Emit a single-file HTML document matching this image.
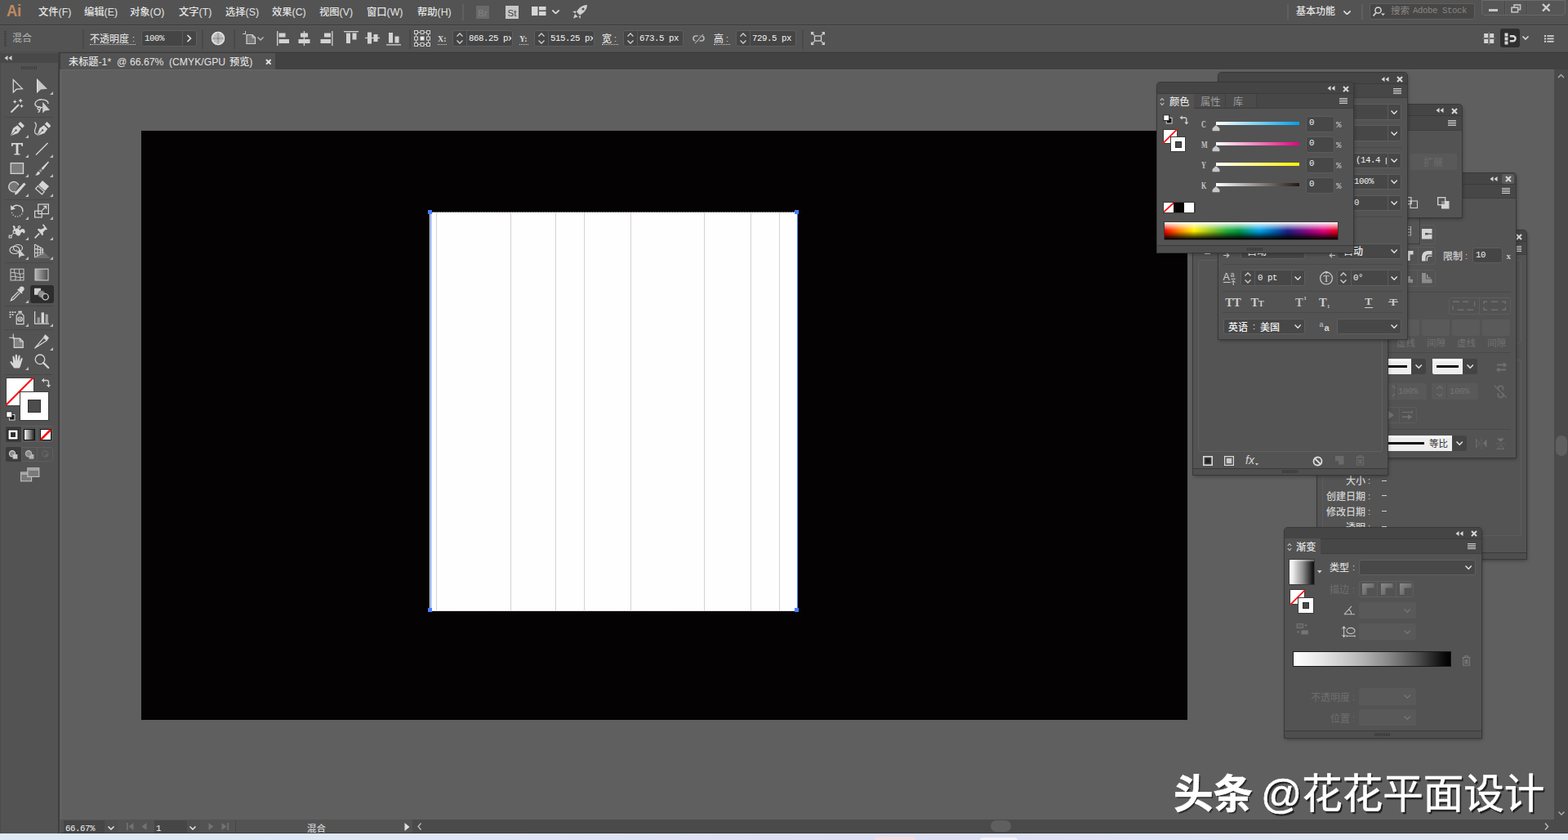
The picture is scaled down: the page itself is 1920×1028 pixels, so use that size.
<!DOCTYPE html><html><head><meta charset="utf-8"><title>Illustrator</title><style>html,body{margin:0;padding:0;background:#535353;overflow:hidden}#r{position:relative;width:1920px;height:1028px;overflow:hidden;font-family:"Liberation Sans",sans-serif}.a{position:absolute;display:block}.p{position:absolute;overflow:hidden;box-sizing:border-box}svg text{font-family:"Liberation Sans","Noto Sans CJK SC",sans-serif;white-space:pre}svg text.m{font-family:"Liberation Mono","Noto Sans CJK SC",monospace;font-size:10.7px;letter-spacing:-0.42px}</style></head><body><div id="r"><div class="a" style="left:0px;top:0px;width:1920px;height:1028px;background:#535353;"></div>
<div class="a" style="left:0px;top:30px;width:1920px;height:1px;background:#3a3a3a;"></div>
<div class="a" style="left:0px;top:31px;width:1920px;height:1px;background:#5a5a5a;"></div>
<span class="a" style="left:8px;top:1px;font:bold 20px/24px 'Liberation Sans',sans-serif;color:#bf8860;transform:scaleX(.92);transform-origin:0 0;letter-spacing:-.3px">Ai</span>
<svg class="a" style="left:46.50px;top:4.35px;overflow:visible" width="43" height="18"><text x="0" y="14.80" font-size="12.3" font-weight="500" fill="#e4e4e4">文件(F)</text></svg>
<svg class="a" style="left:102.50px;top:4.35px;overflow:visible" width="43" height="18"><text x="0" y="14.80" font-size="12.3" font-weight="500" fill="#e4e4e4">编辑(E)</text></svg>
<svg class="a" style="left:158.50px;top:4.35px;overflow:visible" width="45" height="18"><text x="0" y="14.80" font-size="12.3" font-weight="500" fill="#e4e4e4">对象(O)</text></svg>
<svg class="a" style="left:218.50px;top:4.35px;overflow:visible" width="43" height="18"><text x="0" y="14.80" font-size="12.3" font-weight="500" fill="#e4e4e4">文字(T)</text></svg>
<svg class="a" style="left:276.00px;top:4.35px;overflow:visible" width="43" height="18"><text x="0" y="14.80" font-size="12.3" font-weight="500" fill="#e4e4e4">选择(S)</text></svg>
<svg class="a" style="left:332.50px;top:4.35px;overflow:visible" width="44" height="18"><text x="0" y="14.80" font-size="12.3" font-weight="500" fill="#e4e4e4">效果(C)</text></svg>
<svg class="a" style="left:390.50px;top:4.35px;overflow:visible" width="43" height="18"><text x="0" y="14.80" font-size="12.3" font-weight="500" fill="#e4e4e4">视图(V)</text></svg>
<svg class="a" style="left:448.50px;top:4.35px;overflow:visible" width="47" height="18"><text x="0" y="14.80" font-size="12.3" font-weight="500" fill="#e4e4e4">窗口(W)</text></svg>
<svg class="a" style="left:511.00px;top:4.35px;overflow:visible" width="45" height="18"><text x="0" y="14.80" font-size="12.3" font-weight="500" fill="#e4e4e4">帮助(H)</text></svg>
<div class="a" style="left:566px;top:5px;width:2px;height:20px;background:#606060;"></div>
<div class="a" style="left:583px;top:7px;width:16px;height:16px;background:#6a6a6a;"></div>
<span class="a" style="left:591px;top:8.6px;font:normal 11.5px/14px 'Liberation Sans',sans-serif;color:#818181;white-space:pre;transform:translateX(-50%);">Br</span>
<div class="a" style="left:619px;top:7px;width:16px;height:16px;background:#c6c6c6;"></div>
<span class="a" style="left:627px;top:8.6px;font:normal 11.5px/14px 'Liberation Sans',sans-serif;color:#484848;white-space:pre;transform:translateX(-50%);">St</span>
<svg class="a" style="left:651px;top:8px;" width="18" height="12" viewBox="0 0 18 12"><rect x="0" y="0" width="7.5" height="11" fill="#d6d6d6"/><rect x="9" y="0" width="8.5" height="4.5" fill="#d6d6d6"/><rect x="9" y="6" width="8.5" height="5" fill="#d6d6d6"/></svg>
<svg class="a" style="left:676.2px;top:11.55px;" width="9" height="5.5" viewBox="0 0 9 5.5"><path d="M1 1 L4.5 4.5 L8 1" fill="none" stroke="#e0e0e0" stroke-width="1.7" stroke-linecap="square"/></svg>
<svg class="a" style="left:699px;top:5px;" width="22" height="19" viewBox="0 0 22 19"><g fill="#cfcfcf"><path d="M20 1 C14 1.5 9.5 4.5 7 9.5 L11 13.5 C16 11 19.5 7 20 1 Z"/><path d="M6.5 8.5 L2 9 L5.5 11.5 Z"/><path d="M12 14 L11.5 18 L9.5 15 Z"/><path d="M5 12 L8.5 15.5 L3 17.5 Z"/></g><circle cx="15" cy="6" r="1.6" fill="#535353"/></svg>
<div class="a" style="left:1575.5px;top:5px;width:2px;height:19px;background:#5f5f5f;"></div>
<svg class="a" style="left:1587.00px;top:2.74px;overflow:visible" width="50" height="17"><text x="0" y="14.50" font-size="12" font-weight="500" fill="#e4e4e4">基本功能</text></svg>
<svg class="a" style="left:1644.8px;top:12.55px;" width="9" height="5.5" viewBox="0 0 9 5.5"><path d="M1 1 L4.5 4.5 L8 1" fill="none" stroke="#e0e0e0" stroke-width="1.7" stroke-linecap="square"/></svg>
<div class="a" style="left:1666.5px;top:5px;width:2px;height:19px;background:#5f5f5f;"></div>
<div class="a" style="left:1677px;top:4px;width:129px;height:20px;background:#474747;border:1px solid #606060;border-radius:3px;box-sizing:border-box"></div>
<svg class="a" style="left:1680px;top:7px;" width="18" height="14" viewBox="0 0 18 14"><circle cx="7.5" cy="5.5" r="3.6" fill="none" stroke="#d8d8d8" stroke-width="1.5"/><path d="M5 8.5 L1.5 12.5" stroke="#d8d8d8" stroke-width="1.8"/><path d="M11 9.5 L16 9.5 L13.5 12 Z" fill="#d8d8d8"/></svg>
<svg class="a" style="left:1702.50px;top:2.86px;overflow:visible" width="25" height="17"><text x="0" y="14.00" font-size="11.5" fill="#8a8480">搜索</text></svg>
<svg class="a" style="left:1730.00px;top:3.11px;overflow:hidden" width="67" height="16"><text class="m" x="0" y="13.2" fill="#8a8480">Adobe Stock</text></svg>
<div class="a" style="left:1814px;top:-1px;width:103px;height:19.5px;background:#565656;border:1px solid #676767;box-sizing:border-box;border-radius:0 0 4px 4px"></div>
<div class="a" style="left:1815px;top:0px;width:101px;height:1.2px;background:#6c6c6c;"></div>
<div class="a" style="left:1842px;top:1px;width:1px;height:17px;background:#474747;"></div>
<div class="a" style="left:1843px;top:1px;width:1px;height:17px;background:#606060;"></div>
<div class="a" style="left:1869px;top:1px;width:1px;height:17px;background:#474747;"></div>
<div class="a" style="left:1870px;top:1px;width:1px;height:17px;background:#606060;"></div>
<div class="a" style="left:1823px;top:11px;width:10.5px;height:3.2px;background:#c6c6c6;"></div>
<svg class="a" style="left:1849.5px;top:4.5px;" width="14" height="11" viewBox="0 0 14 11"><rect x="4" y="1" width="7.6" height="5.6" fill="none" stroke="#bdbdbd" stroke-width="1.7"/><rect x="1" y="4.2" width="7.6" height="5.6" fill="#565656" stroke="#bdbdbd" stroke-width="1.7"/></svg>
<svg class="a" style="left:1887.7px;top:3.7px;" width="10.6" height="10.6" viewBox="0 0 10.6 10.6"><path d="M1 1 L9.6 9.6 M9.6 1 L1 9.6" stroke="#cdcdcd" stroke-width="2.3" fill="none"/></svg>
<div class="a" style="left:0px;top:63px;width:1920px;height:1px;background:#4c4c4c;"></div>
<svg class="a" style="left:5px;top:38px;" width="4" height="20" viewBox="0 0 4 20"><rect x="0" y="0" width="3" height="1" fill="#3a3a3a"/><rect x="0" y="2" width="3" height="1" fill="#3a3a3a"/><rect x="0" y="4" width="3" height="1" fill="#3a3a3a"/><rect x="0" y="6" width="3" height="1" fill="#3a3a3a"/><rect x="0" y="8" width="3" height="1" fill="#3a3a3a"/><rect x="0" y="10" width="3" height="1" fill="#3a3a3a"/><rect x="0" y="12" width="3" height="1" fill="#3a3a3a"/><rect x="0" y="14" width="3" height="1" fill="#3a3a3a"/><rect x="0" y="16" width="3" height="1" fill="#3a3a3a"/><rect x="0" y="18" width="3" height="1" fill="#3a3a3a"/></svg>
<svg class="a" style="left:15.00px;top:35.74px;overflow:visible" width="26" height="17"><text x="0" y="14.50" font-size="12" fill="#b4b4b4">混合</text></svg>
<div class="a" style="left:100.5px;top:35.5px;width:2px;height:24.5px;background:#494949;"></div>
<svg class="a" style="left:110.00px;top:37.24px;overflow:visible" width="50" height="17"><text x="0" y="14.50" font-size="12" font-weight="500" fill="#dcdcdc">不透明度</text></svg>
<span class="a" style="left:162px;top:40px;font:normal 11px/14px 'Liberation Sans',sans-serif;color:#dcdcdc;white-space:pre;">:</span>
<div class="a" style="left:110px;top:54px;width:56px;height:1px;background:none;border-top:1px dotted #cfcfcf;height:0"></div>
<div class="a" style="left:173px;top:37px;width:68px;height:20px;background:#454545;border:1px solid #5e5e5e;border-radius:3px;box-sizing:border-box"></div>
<div class="a" style="left:223px;top:38px;width:1px;height:18px;background:#5a5a5a;"></div>
<svg class="a" style="left:176.50px;top:36.81px;overflow:hidden" width="25" height="16"><text class="m" x="0" y="13.2" fill="#f0f0f0">100%</text></svg>
<svg class="a" style="left:228px;top:42px;" width="7" height="10" viewBox="0 0 7 10"><path d="M1.5 1 L5.5 5 L1.5 9" fill="none" stroke="#e6e6e6" stroke-width="1.6"/></svg>
<div class="a" style="left:247.2px;top:35.5px;width:2px;height:24.5px;background:#494949;"></div>
<svg class="a" style="left:258px;top:38px;" width="18" height="18" viewBox="0 0 18 18"><circle cx="9" cy="9" r="8.2" fill="#d2d2d2"/><g fill="#a9a9a9"><rect x="7.4" y="2.2" width="3.2" height="13.6"/><rect x="2.2" y="7.4" width="13.6" height="3.2"/><path d="M4.2 4.2 L7 5.2 L5.2 7 Z M13.8 4.2 L11 5.2 L12.8 7 Z M13.8 13.8 L11 12.8 L12.8 11 Z M4.2 13.8 L7 12.8 L5.2 11 Z"/></g><circle cx="9" cy="9" r="1.2" fill="#8a8a8a"/><circle cx="9" cy="9" r="7.6" fill="none" stroke="#e6e6e6" stroke-width="1.1"/></svg>
<div class="a" style="left:285.5px;top:35.5px;width:2px;height:24.5px;background:#494949;"></div>
<svg class="a" style="left:297px;top:38px;" width="18" height="17" viewBox="0 0 18 17"><path d="M3.5 0 V4 M0 3.5 H4" stroke="#c8c8c8" stroke-width="1"/><path d="M5 4.5 H12 L15.5 8 V15.5 H5 Z" fill="#787878" stroke="#d0d0d0" stroke-width="1.2"/><path d="M12 4.5 V8 H15.5" fill="none" stroke="#d0d0d0" stroke-width="1"/></svg>
<svg class="a" style="left:314.5px;top:44.5px;" width="8" height="5" viewBox="0 0 8 5"><path d="M1 1 L4 4 L7 1" fill="none" stroke="#bdbdbd" stroke-width="1.4" stroke-linecap="square"/></svg>
<svg class="a" style="left:339px;top:38px;" width="16" height="18" viewBox="0 0 16 18"><rect x="0" y="0" width="1.3" height="18" fill="#d2d2d2"/><rect x="2.5" y="2.5" width="8" height="5" fill="#d2d2d2"/><rect x="2.5" y="10" width="12.5" height="5" fill="#d2d2d2"/></svg>
<svg class="a" style="left:365px;top:38px;" width="15" height="18" viewBox="0 0 15 18"><rect x="6.8" y="0" width="1.3" height="18" fill="#d2d2d2"/><rect x="3" y="2.5" width="9" height="5" fill="#d2d2d2"/><rect x="0.5" y="10" width="14" height="5" fill="#d2d2d2"/></svg>
<svg class="a" style="left:392px;top:38px;" width="16" height="18" viewBox="0 0 16 18"><rect x="14.2" y="0" width="1.3" height="18" fill="#d2d2d2"/><rect x="5" y="2.5" width="8" height="5" fill="#d2d2d2"/><rect x="0.5" y="10" width="12.5" height="5" fill="#d2d2d2"/></svg>
<svg class="a" style="left:421px;top:38px;" width="18" height="16" viewBox="0 0 18 16"><rect x="0" y="0" width="18" height="1.3" fill="#d2d2d2"/><rect x="3" y="2.5" width="5" height="12.5" fill="#d2d2d2"/><rect x="10.5" y="2.5" width="5" height="8" fill="#d2d2d2"/></svg>
<svg class="a" style="left:447px;top:39px;" width="18" height="15" viewBox="0 0 18 15"><rect x="0" y="6.8" width="18" height="1.3" fill="#d2d2d2"/><rect x="3" y="0.5" width="5" height="14" fill="#d2d2d2"/><rect x="10.5" y="3" width="5" height="9" fill="#d2d2d2"/></svg>
<svg class="a" style="left:473px;top:39px;" width="18" height="17" viewBox="0 0 18 17"><rect x="0" y="15.2" width="18" height="1.3" fill="#d2d2d2"/><rect x="3" y="1" width="5" height="12.5" fill="#d2d2d2"/><rect x="10.5" y="5.5" width="5" height="8" fill="#d2d2d2"/></svg>
<div class="a" style="left:500.5px;top:35.5px;width:2px;height:24.5px;background:#494949;"></div>
<svg class="a" style="left:506.5px;top:36.5px;" width="20" height="20" viewBox="0 0 20 20"><rect x="0.5" y="0.5" width="4" height="4" fill="none" stroke="#d0d0d0" stroke-width="1"/><rect x="8" y="0.5" width="4" height="4" fill="none" stroke="#d0d0d0" stroke-width="1"/><rect x="15.5" y="0.5" width="4" height="4" fill="none" stroke="#d0d0d0" stroke-width="1"/><rect x="0.5" y="8" width="4" height="4" fill="none" stroke="#d0d0d0" stroke-width="1"/><rect x="8" y="8" width="4" height="4" fill="#f2f2f2" stroke="#d0d0d0" stroke-width="1"/><rect x="15.5" y="8" width="4" height="4" fill="none" stroke="#d0d0d0" stroke-width="1"/><rect x="0.5" y="15.5" width="4" height="4" fill="none" stroke="#d0d0d0" stroke-width="1"/><rect x="8" y="15.5" width="4" height="4" fill="none" stroke="#d0d0d0" stroke-width="1"/><rect x="15.5" y="15.5" width="4" height="4" fill="none" stroke="#d0d0d0" stroke-width="1"/><path d="M4.5 2.5 H8 M12 2.5 H15.5 M4.5 17.5 H8 M12 17.5 H15.5 M2.5 4.5 V8 M2.5 12 V15.5 M17.5 4.5 V8 M17.5 12 V15.5" stroke="#d0d0d0" stroke-width="1"/></svg>
<span class="a" style="left:536px;top:40px;font:bold 11px/14px 'Liberation Serif',sans-serif;color:#dcdcdc;white-space:pre;transform:scaleX(.9);transform-origin:0 50%;">X:</span>
<div class="a" style="left:536px;top:54px;width:10.5px;height:1px;background:none;border-top:1px dotted #cfcfcf;height:0"></div>
<div class="a" style="left:553.5px;top:37px;width:74.5px;height:20px;background:#454545;border:1px solid #5e5e5e;border-radius:3px;box-sizing:border-box"></div>
<div class="a" style="left:570.5px;top:38px;width:1px;height:18px;background:#5a5a5a;"></div>
<svg class="a" style="left:557.8px;top:38px;" width="10" height="18" viewBox="0 0 10 18"><path d="M1.5 6.5 L5 3 L8.5 6.5 M1.5 11.5 L5 15 L8.5 11.5" fill="none" stroke="#cfcfcf" stroke-width="1.3"/></svg>
<svg class="a" style="left:573.50px;top:36.91px;overflow:hidden" width="52.5" height="16"><text class="m" x="0" y="13.2" fill="#f4f4f4">868.25 px</text></svg>
<span class="a" style="left:636px;top:40px;font:bold 11px/14px 'Liberation Serif',sans-serif;color:#dcdcdc;white-space:pre;transform:scaleX(.9);transform-origin:0 50%;">Y:</span>
<div class="a" style="left:636px;top:54px;width:10.5px;height:1px;background:none;border-top:1px dotted #cfcfcf;height:0"></div>
<div class="a" style="left:653.5px;top:37px;width:74.5px;height:20px;background:#454545;border:1px solid #5e5e5e;border-radius:3px;box-sizing:border-box"></div>
<div class="a" style="left:670.5px;top:38px;width:1px;height:18px;background:#5a5a5a;"></div>
<svg class="a" style="left:657.8px;top:38px;" width="10" height="18" viewBox="0 0 10 18"><path d="M1.5 6.5 L5 3 L8.5 6.5 M1.5 11.5 L5 15 L8.5 11.5" fill="none" stroke="#cfcfcf" stroke-width="1.3"/></svg>
<svg class="a" style="left:673.50px;top:36.91px;overflow:hidden" width="52.5" height="16"><text class="m" x="0" y="13.2" fill="#f4f4f4">515.25 px</text></svg>
<svg class="a" style="left:737.00px;top:37.24px;overflow:visible" width="14" height="17"><text x="0" y="14.50" font-size="12" font-weight="500" fill="#dcdcdc">宽</text></svg>
<span class="a" style="left:752px;top:40px;font:normal 11px/14px 'Liberation Sans',sans-serif;color:#dcdcdc;white-space:pre;">:</span>
<div class="a" style="left:737px;top:54px;width:20px;height:1px;background:none;border-top:1px dotted #cfcfcf;height:0"></div>
<div class="a" style="left:762.5px;top:37px;width:74.5px;height:20px;background:#454545;border:1px solid #5e5e5e;border-radius:3px;box-sizing:border-box"></div>
<div class="a" style="left:779.5px;top:38px;width:1px;height:18px;background:#5a5a5a;"></div>
<svg class="a" style="left:766.8px;top:38px;" width="10" height="18" viewBox="0 0 10 18"><path d="M1.5 6.5 L5 3 L8.5 6.5 M1.5 11.5 L5 15 L8.5 11.5" fill="none" stroke="#cfcfcf" stroke-width="1.3"/></svg>
<svg class="a" style="left:782.50px;top:36.91px;overflow:hidden" width="52.5" height="16"><text class="m" x="0" y="13.2" fill="#f4f4f4">673.5 px</text></svg>
<svg class="a" style="left:874.00px;top:37.24px;overflow:visible" width="14" height="17"><text x="0" y="14.50" font-size="12" font-weight="500" fill="#dcdcdc">高</text></svg>
<span class="a" style="left:889px;top:40px;font:normal 11px/14px 'Liberation Sans',sans-serif;color:#dcdcdc;white-space:pre;">:</span>
<div class="a" style="left:874px;top:54px;width:20px;height:1px;background:none;border-top:1px dotted #cfcfcf;height:0"></div>
<div class="a" style="left:900.8px;top:37px;width:74.5px;height:20px;background:#454545;border:1px solid #5e5e5e;border-radius:3px;box-sizing:border-box"></div>
<div class="a" style="left:917.8px;top:38px;width:1px;height:18px;background:#5a5a5a;"></div>
<svg class="a" style="left:905.1px;top:38px;" width="10" height="18" viewBox="0 0 10 18"><path d="M1.5 6.5 L5 3 L8.5 6.5 M1.5 11.5 L5 15 L8.5 11.5" fill="none" stroke="#cfcfcf" stroke-width="1.3"/></svg>
<svg class="a" style="left:920.80px;top:36.91px;overflow:hidden" width="52.5" height="16"><text class="m" x="0" y="13.2" fill="#f4f4f4">729.5 px</text></svg>
<svg class="a" style="left:848px;top:40px;" width="15" height="14" viewBox="0 0 15 14"><g fill="none" stroke="#b8b8b8" stroke-width="1.6"><path d="M6.5 4 H4 a3 3 0 0 0 0 6 H6.5"/><path d="M8.5 4 H11 a3 3 0 0 1 0 6 H8.5"/></g><path d="M2 12.5 L13 1.5" stroke="#535353" stroke-width="2.2"/><path d="M3 13 L13 2" stroke="#b8b8b8" stroke-width="1.1"/></svg>
<div class="a" style="left:981.5px;top:35.5px;width:2px;height:24.5px;background:#494949;"></div>
<svg class="a" style="left:992.5px;top:39px;" width="17" height="16" viewBox="0 0 17 16"><g fill="none" stroke="#d0d0d0" stroke-width="1.3"><rect x="4.5" y="5" width="8" height="6"/><path d="M0.7 3.5 V0.7 H3.5 M13.5 0.7 H16.3 V3.5 M16.3 12.5 V15.3 H13.5 M3.5 15.3 H0.7 V12.5 M1 1 L4 4 M16 1 L13 4 M16 15 L13 12 M1 15 L4 12"/></g></svg>
<svg class="a" style="left:1814.5px;top:38.5px;" width="16" height="16" viewBox="0 0 16 16"><g fill="#d4d4d4"><rect x="2.2" y="2" width="5" height="5"/><rect x="9.2" y="2" width="5" height="5"/><rect x="2.2" y="9" width="5" height="5"/><rect x="9.2" y="9" width="5" height="5"/></g><path d="M8.2 0 V16 M0 8 H16" stroke="#8a8a8a" stroke-width=".8"/></svg>
<div class="a" style="left:1837px;top:35px;width:24px;height:23px;background:#2f2f2f;border-radius:3px"></div>
<svg class="a" style="left:1841.5px;top:39.5px;" width="16" height="15" viewBox="0 0 16 15"><g fill="#d8d8d8"><rect x="0.5" y="0.5" width="4" height="4"/><rect x="0.5" y="5.5" width="4" height="4"/><rect x="0.5" y="10.5" width="4" height="4"/></g><path d="M6.8 4.2 H10.6 a3 3 0 0 1 0 6 H6.8" fill="none" stroke="#d8d8d8" stroke-width="2.4"/></svg>
<svg class="a" style="left:1863.5px;top:44px;" width="8" height="5" viewBox="0 0 8 5"><path d="M1 1 L4 4 L7 1" fill="none" stroke="#e0e0e0" stroke-width="1.5" stroke-linecap="square"/></svg>
<svg class="a" style="left:1890.5px;top:42.8px;" width="12" height="9" viewBox="0 0 12 9"><rect x="0" y="0" width="2" height="2" fill="#d4d4d4"/><rect x="3.4" y="0.15" width="8.2" height="1.7" fill="#d4d4d4"/><rect x="0" y="3.4" width="2" height="2" fill="#d4d4d4"/><rect x="3.4" y="3.55" width="8.2" height="1.7" fill="#d4d4d4"/><rect x="0" y="6.8" width="2" height="2" fill="#d4d4d4"/><rect x="3.4" y="6.95" width="8.2" height="1.7" fill="#d4d4d4"/></svg>
<div class="a" style="left:0px;top:64px;width:1920px;height:21px;background:#424242;"></div>
<div class="a" style="left:0px;top:64px;width:1920px;height:1px;background:#3a3a3a;"></div>
<div class="a" style="left:74px;top:65px;width:263px;height:20px;background:#535353;"></div>
<svg class="a" style="left:83.50px;top:65.21px;overflow:visible" width="56" height="18"><text x="0" y="14.70" font-size="12.2" font-weight="500" fill="#e2e2e2">未标题-1*</text></svg>
<svg class="a" style="left:142.60px;top:65.21px;overflow:visible" width="14" height="18"><text x="0" y="14.70" font-size="12.2" font-weight="500" fill="#e2e2e2">@</text></svg>
<svg class="a" style="left:159.00px;top:65.21px;overflow:visible" width="45" height="18"><text x="0" y="14.70" font-size="12.2" font-weight="500" fill="#e2e2e2">66.67%</text></svg>
<svg class="a" style="left:206.50px;top:65.21px;overflow:visible" width="70" height="18"><text x="0" y="14.70" font-size="12.2" font-weight="500" fill="#e2e2e2">(CMYK/GPU</text></svg>
<svg class="a" style="left:280.70px;top:65.21px;overflow:visible" width="31" height="18"><text x="0" y="14.70" font-size="12.2" font-weight="500" fill="#e2e2e2">预览)</text></svg>
<svg class="a" style="left:324.5px;top:71.9px;" width="7.6" height="7.6" viewBox="0 0 7.6 7.6"><path d="M1 1 L6.6 6.6 M6.6 1 L1 6.6" stroke="#e6e6e6" stroke-width="1.9" fill="none"/></svg>
<div class="a" style="left:74px;top:85px;width:1830px;height:918px;background:#5f5f5f;"></div>
<div class="a" style="left:74px;top:85px;width:1830px;height:1px;background:#676767;"></div>
<div class="a" style="left:74px;top:85px;width:1px;height:918px;background:#686868;"></div>
<div class="a" style="left:173px;top:160px;width:1281px;height:721px;background:#040203;"></div>
<div class="a" style="left:526px;top:259.5px;width:451px;height:488px;background:#fefefe;"></div>
<div class="a" style="left:533.5px;top:260px;width:1px;height:487px;background:#d6d3d1;"></div>
<div class="a" style="left:624.5px;top:260px;width:1px;height:487px;background:#d6d3d1;"></div>
<div class="a" style="left:680px;top:260px;width:1px;height:487px;background:#d6d3d1;"></div>
<div class="a" style="left:715.3px;top:260px;width:1px;height:487px;background:#d6d3d1;"></div>
<div class="a" style="left:771.5px;top:260px;width:1px;height:487px;background:#d6d3d1;"></div>
<div class="a" style="left:862.4px;top:260px;width:1px;height:487px;background:#d6d3d1;"></div>
<div class="a" style="left:918.6px;top:260px;width:1px;height:487px;background:#d6d3d1;"></div>
<div class="a" style="left:953.6px;top:260px;width:1px;height:487px;background:#d6d3d1;"></div>
<div class="a" style="left:526px;top:259px;width:451px;height:1px;background:none;border-top:1px dotted #bbb;height:0"></div>
<div class="a" style="left:526px;top:747px;width:451px;height:1px;background:none;border-top:1px dotted #bbb;height:0"></div>
<div class="a" style="left:527px;top:260px;width:1px;height:487px;background:#4a7dff;"></div>
<div class="a" style="left:976px;top:260px;width:1px;height:487px;background:#4a7dff;"></div>
<div class="a" style="left:524px;top:257px;width:5px;height:5px;background:#4a7dff;"></div>
<div class="a" style="left:973px;top:257px;width:5px;height:5px;background:#4a7dff;"></div>
<div class="a" style="left:524px;top:744px;width:5px;height:5px;background:#4a7dff;"></div>
<div class="a" style="left:973px;top:744px;width:5px;height:5px;background:#4a7dff;"></div>
<div class="a" style="left:1903px;top:85px;width:17px;height:918px;background:#4a4a4a;"></div>
<svg class="a" style="left:1907px;top:90px;" width="9" height="6" viewBox="0 0 9 6"><path d="M1 5 L4.5 1.5 L8 5" fill="none" stroke="#b0b0b0" stroke-width="1.3"/></svg>
<div class="a" style="left:1904.5px;top:533px;width:14px;height:25px;background:#5f5f5f;border-radius:7px"></div>
<svg class="a" style="left:1907.5px;top:992.5px;" width="8" height="5" viewBox="0 0 8 5"><path d="M1 1 L4 4 L7 1" fill="none" stroke="#b0b0b0" stroke-width="1.3" stroke-linecap="square"/></svg>
<div class="a" style="left:74px;top:1003px;width:1846px;height:17px;background:#4a4a4a;"></div>
<div class="a" style="left:74px;top:1003px;width:431px;height:17px;background:#535353;"></div>
<div class="a" style="left:78px;top:1004px;width:50px;height:15px;background:#464646;"></div>
<svg class="a" style="left:80.00px;top:1003.51px;overflow:hidden" width="37" height="16"><text class="m" x="0" y="13.2" fill="#f0f0f0">66.67%</text></svg>
<div class="a" style="left:128px;top:1004px;width:16px;height:15px;background:#4f4f4f;"></div>
<svg class="a" style="left:132.3px;top:1010.5px;" width="8" height="5" viewBox="0 0 8 5"><path d="M1 1 L4 4 L7 1" fill="none" stroke="#e6e6e6" stroke-width="1.5" stroke-linecap="square"/></svg>
<svg class="a" style="left:155px;top:1007px;" width="9" height="9" viewBox="0 0 9 9"><rect x="0" y="0" width="1.6" height="9" fill="#727272"/><path d="M8.5 0 V9 L2.5 4.5 Z" fill="#727272"/></svg>
<svg class="a" style="left:173px;top:1007px;" width="7" height="9" viewBox="0 0 7 9"><path d="M6.5 0 V9 L0.5 4.5 Z" fill="#727272"/></svg>
<div class="a" style="left:188.5px;top:1004px;width:40px;height:15px;background:#464646;"></div>
<svg class="a" style="left:190.50px;top:1003.51px;overflow:hidden" width="7" height="16"><text class="m" x="0" y="13.2" fill="#f0f0f0">1</text></svg>
<div class="a" style="left:228.5px;top:1004px;width:16px;height:15px;background:#4f4f4f;"></div>
<svg class="a" style="left:232.3px;top:1010.5px;" width="8" height="5" viewBox="0 0 8 5"><path d="M1 1 L4 4 L7 1" fill="none" stroke="#e6e6e6" stroke-width="1.5" stroke-linecap="square"/></svg>
<svg class="a" style="left:255px;top:1007px;" width="7" height="9" viewBox="0 0 7 9"><path d="M0.5 0 V9 L6.5 4.5 Z" fill="#727272"/></svg>
<svg class="a" style="left:270.5px;top:1007px;" width="9" height="9" viewBox="0 0 9 9"><rect x="7.4" y="0" width="1.6" height="9" fill="#727272"/><path d="M0.5 0 V9 L6.5 4.5 Z" fill="#727272"/></svg>
<div class="a" style="left:288px;top:1004px;width:1px;height:15px;background:#474747;"></div>
<svg class="a" style="left:376.00px;top:1003.75px;overflow:visible" width="25" height="17"><text x="0" y="14.00" font-size="11.5" font-weight="500" fill="#d0d0d0">混合</text></svg>
<svg class="a" style="left:494.5px;top:1007px;" width="7" height="10" viewBox="0 0 7 10"><path d="M0.5 0 V10 L6.5 5 Z" fill="#e0e0e0"/></svg>
<svg class="a" style="left:511px;top:1007px;" width="6" height="9" viewBox="0 0 6 9"><path d="M4.5 0.5 L1 4.5 L4.5 8.5" fill="none" stroke="#c0c0c0" stroke-width="1.3"/></svg>
<svg class="a" style="left:1891px;top:1007px;" width="6" height="9" viewBox="0 0 6 9"><path d="M1 0.5 L4.5 4.5 L1 8.5" fill="none" stroke="#c0c0c0" stroke-width="1.3"/></svg>
<div class="a" style="left:1213px;top:1004px;width:25px;height:14px;background:#5f5f5f;border-radius:7px"></div>
<div class="a" style="left:0px;top:1019px;width:1920px;height:1px;background:#3a3a3a;"></div>
<div class="a" style="left:0px;top:1020px;width:1920px;height:8px;background:linear-gradient(90deg,#deeaf6 0%,#dfe6f5 30%,#dddff2 55%,#dfe4f4 75%,#e2e8f3 100%);"></div>
<div class="a" style="left:1071px;top:1024px;width:50px;height:6px;background:#f6dfe2;border-radius:4px 4px 0 0"></div>
<div class="a" style="left:1200px;top:1025px;width:46px;height:5px;background:#f4f4fa;border-radius:4px 4px 0 0"></div>
<div class="a" style="left:0px;top:64px;width:72px;height:956px;background:#535353;"></div>
<div class="a" style="left:71px;top:64px;width:2px;height:956px;background:#3f3f3f;"></div>
<div class="a" style="left:73px;top:64px;width:1px;height:21px;background:#3f3f3f;"></div>
<div class="a" style="left:73px;top:85px;width:1px;height:935px;background:#595959;"></div>
<div class="a" style="left:0px;top:64px;width:1px;height:956px;background:#4a4a4a;"></div>
<div class="a" style="left:1px;top:65px;width:70px;height:12px;background:#484848;"></div>
<svg class="a" style="left:4.5px;top:68px;" width="10" height="6" viewBox="0 0 10 6"><path d="M4.5 0 L4.5 6 L0.5 3 Z M9.5 0 L9.5 6 L5.5 3 Z" fill="#cfcfcf"/></svg>
<svg class="a" style="left:26px;top:80.5px;" width="20" height="4" viewBox="0 0 20 4"><rect x="0" y="0" width="1" height="4" fill="#3c3c3c"/><rect x="2" y="0" width="1" height="4" fill="#3c3c3c"/><rect x="4" y="0" width="1" height="4" fill="#3c3c3c"/><rect x="6" y="0" width="1" height="4" fill="#3c3c3c"/><rect x="8" y="0" width="1" height="4" fill="#3c3c3c"/><rect x="10" y="0" width="1" height="4" fill="#3c3c3c"/><rect x="12" y="0" width="1" height="4" fill="#3c3c3c"/><rect x="14" y="0" width="1" height="4" fill="#3c3c3c"/><rect x="16" y="0" width="1" height="4" fill="#3c3c3c"/><rect x="18" y="0" width="1" height="4" fill="#3c3c3c"/></svg>
<div class="a" style="left:6px;top:143px;width:59px;height:1px;background:#484848;"></div>
<div class="a" style="left:6px;top:244px;width:59px;height:1px;background:#484848;"></div>
<div class="a" style="left:6px;top:321px;width:59px;height:1px;background:#484848;"></div>
<div class="a" style="left:6px;top:374px;width:59px;height:1px;background:#484848;"></div>
<div class="a" style="left:6px;top:403px;width:59px;height:1px;background:#484848;"></div>
<div class="a" style="left:6px;top:458px;width:59px;height:1px;background:#484848;"></div>
<svg class="a" style="left:10px;top:94px;" width="22" height="22" viewBox="0 0 22 22"><path d="M6.3 3.6 V19 L10.2 15.2 L17.4 14.6 Z" fill="none" stroke="#d6d6d6" stroke-width="1.3" stroke-linejoin="miter"/></svg>
<svg class="a" style="left:40px;top:94px;" width="22" height="22" viewBox="0 0 22 22"><path d="M5.6 2.6 V19.6 L10 15.6 L18 14.8 Z" fill="#c6c6c6"/><path d="M5.6 2.6 V19.6" stroke="#f0f0f0" stroke-width="1"/></svg><svg class="a" style="left:60.5px;top:111.5px;" width="4" height="4" viewBox="0 0 4 4"><path d="M4 0 V4 H0 Z" fill="#bdbdbd"/></svg>
<svg class="a" style="left:10px;top:119px;" width="22" height="22" viewBox="0 0 22 22"><path d="M3.5 18.5 L13 9" stroke="#d6d6d6" stroke-width="2"/><path d="M8.2 2.9 L8.98 4.72 L10.8 5.5 L8.98 6.28 L8.2 8.1 L7.42 6.28 L5.6 5.5 L7.42 4.72 Z" fill="#d6d6d6"/><path d="M15.2 1.4 L16.04 3.36 L18 4.2 L16.04 5.04 L15.2 7 L14.36 5.04 L12.4 4.2 L14.36 3.36 Z" fill="#d6d6d6"/><path d="M16.5 8.4 L17.22 10.08 L18.9 10.8 L17.22 11.52 L16.5 13.2 L15.78 11.52 L14.1 10.8 L15.78 10.08 Z" fill="#d6d6d6"/></svg>
<svg class="a" style="left:40px;top:119px;" width="22" height="22" viewBox="0 0 22 22"><g fill="none" stroke="#d6d6d6" stroke-width="1.3"><path d="M12 12.5 C6 13 2.5 10.5 3 7.5 C3.6 4 8 2.5 12 2.8 C16 3 19.5 5 19 8"/><circle cx="7.8" cy="13.5" r="1.8"/><path d="M8.5 15.2 C9 17 8 18 6.5 18.5"/></g><path d="M12.2 5.8 V19.5 L15.2 16.5 L21 15.8 Z" fill="#cdcdcd"/></svg>
<svg class="a" style="left:10px;top:147px;" width="22" height="22" viewBox="0 0 22 22"><path d="M2.8 19.2 L6 10 L11.3 6.3 L15.8 10.8 L12 16 Z" fill="#d6d6d6"/><path d="M12.3 4.7 L15 2 L20 7 L17.3 9.7 Z" fill="#d6d6d6"/><path d="M3.3 18.7 L9 13" stroke="#535353" stroke-width="1"/><circle cx="9.6" cy="12.4" r="1.2" fill="#535353"/></svg><svg class="a" style="left:30.5px;top:164.5px;" width="4" height="4" viewBox="0 0 4 4"><path d="M4 0 V4 H0 Z" fill="#bdbdbd"/></svg>
<svg class="a" style="left:40px;top:147px;" width="22" height="22" viewBox="0 0 22 22"><path d="M2.5 2.5 C5.5 5 4.5 8 3 11 C1.5 14.5 3 17.5 6 17" fill="none" stroke="#d6d6d6" stroke-width="1.2"/><g transform="translate(2.5,0)"><path d="M2.8 19.2 L6 10 L11.3 6.3 L15.8 10.8 L12 16 Z" fill="#d6d6d6"/><path d="M12.3 4.7 L15 2 L20 7 L17.3 9.7 Z" fill="#d6d6d6"/><path d="M3.3 18.7 L9 13" stroke="#535353" stroke-width="1"/><circle cx="9.6" cy="12.4" r="1.2" fill="#535353"/></g></svg>
<svg class="a" style="left:10px;top:171px;" width="22" height="22" viewBox="0 0 22 22"><path d="M4 4 H18 V8 H16.6 L16 5.8 H12.4 V17 L14.6 17.6 V18.6 H7.4 V17.6 L9.6 17 V5.8 H6 L5.4 8 H4 Z" fill="#d6d6d6"/></svg><svg class="a" style="left:30.5px;top:188.5px;" width="4" height="4" viewBox="0 0 4 4"><path d="M4 0 V4 H0 Z" fill="#bdbdbd"/></svg>
<svg class="a" style="left:40px;top:171px;" width="22" height="22" viewBox="0 0 22 22"><path d="M4 18.5 L18.5 4" stroke="#d6d6d6" stroke-width="1.5"/></svg><svg class="a" style="left:60.5px;top:188.5px;" width="4" height="4" viewBox="0 0 4 4"><path d="M4 0 V4 H0 Z" fill="#bdbdbd"/></svg>
<svg class="a" style="left:10px;top:195px;" width="22" height="22" viewBox="0 0 22 22"><rect x="3.2" y="4.6" width="15.3" height="12.8" fill="#7c7c7c" stroke="#d6d6d6" stroke-width="1.3"/></svg><svg class="a" style="left:30.5px;top:212.5px;" width="4" height="4" viewBox="0 0 4 4"><path d="M4 0 V4 H0 Z" fill="#bdbdbd"/></svg>
<svg class="a" style="left:40px;top:195px;" width="22" height="22" viewBox="0 0 22 22"><path d="M19 2.5 L20 3.5 L12.5 13 L10.5 11 Z" fill="#d6d6d6"/><path d="M9.8 11.8 L11.8 13.8 L9.8 16 L7.6 13.8 Z" fill="#9c9c9c"/><path d="M7 14.5 L9.2 16.7 C8 19 5.5 19.8 3 19.5 C4.8 18.5 5 16 7 14.5 Z" fill="#d6d6d6"/></svg><svg class="a" style="left:60.5px;top:212.5px;" width="4" height="4" viewBox="0 0 4 4"><path d="M4 0 V4 H0 Z" fill="#bdbdbd"/></svg>
<svg class="a" style="left:10px;top:219px;" width="22" height="22" viewBox="0 0 22 22"><path d="M9 15.5 A6.2 6.2 0 1 1 12.8 7.5" fill="#777" stroke="#d6d6d6" stroke-width="1.3"/><path d="M8 19.5 L8.6 16.2 L19.4 4.5 L21.6 6.6 L11 18.4 Z" fill="#d6d6d6"/></svg><svg class="a" style="left:30.5px;top:236.5px;" width="4" height="4" viewBox="0 0 4 4"><path d="M4 0 V4 H0 Z" fill="#bdbdbd"/></svg>
<svg class="a" style="left:40px;top:219px;" width="22" height="22" viewBox="0 0 22 22"><path d="M12 2 L20 9 L15.2 14.6 L7.2 7.6 Z" fill="#d6d6d6"/><path d="M6.4 8.6 L14.2 15.6 L11.4 18.8 L3.6 12 Z" fill="none" stroke="#d6d6d6" stroke-width="1.2"/></svg><svg class="a" style="left:60.5px;top:236.5px;" width="4" height="4" viewBox="0 0 4 4"><path d="M4 0 V4 H0 Z" fill="#bdbdbd"/></svg>
<svg class="a" style="left:10px;top:247px;" width="22" height="22" viewBox="0 0 22 22"><path d="M5 8 A6.8 6.8 0 0 1 17.8 11.5" fill="none" stroke="#d6d6d6" stroke-width="1.5"/><path d="M17.8 11.5 A6.8 6.8 0 0 1 4.3 12.5" fill="none" stroke="#d6d6d6" stroke-width="1.4" stroke-dasharray="1.2 1.8"/><path d="M3 4.2 L3.4 10.2 L9 8.6 Z" fill="#d6d6d6"/></svg><svg class="a" style="left:30.5px;top:264.5px;" width="4" height="4" viewBox="0 0 4 4"><path d="M4 0 V4 H0 Z" fill="#bdbdbd"/></svg>
<svg class="a" style="left:40px;top:247px;" width="22" height="22" viewBox="0 0 22 22"><g fill="none" stroke="#d6d6d6" stroke-width="1.2"><rect x="2.6" y="11.2" width="8.6" height="7.8"/><rect x="6.8" y="3" width="12.6" height="11.6"/><path d="M11.5 10.5 L16.5 5.5 M13.2 5.3 H16.7 V8.8"/></g></svg><svg class="a" style="left:60.5px;top:264.5px;" width="4" height="4" viewBox="0 0 4 4"><path d="M4 0 V4 H0 Z" fill="#bdbdbd"/></svg>
<svg class="a" style="left:10px;top:272px;" width="22" height="22" viewBox="0 0 22 22"><path d="M5.5 5 C7.5 2.5 9.5 5.5 8.5 8.5 C11 6.5 13.5 8 14.5 10 C16 7.5 19.5 7 20.5 10.5 C21 13 19.5 14.5 18.5 13 C17.5 11 15.5 12 15 14.5 C14.2 17.5 10.5 17 9.5 14.5 C8 13 5.8 12.8 5.5 10.5 C7.2 9.8 7.2 7 5.5 5 Z" fill="#d6d6d6"/><g fill="#535353" stroke="#d6d6d6" stroke-width="1.1"><circle cx="7.8" cy="12" r="1.7"/><rect x="1.2" y="16.2" width="2.8" height="2.8"/><circle cx="13.5" cy="5.8" r="1.3"/></g><path d="M4 16.2 L6.6 13.3 M9 10.8 L12.6 6.8" stroke="#d6d6d6" stroke-width="1"/></svg><svg class="a" style="left:30.5px;top:289.5px;" width="4" height="4" viewBox="0 0 4 4"><path d="M4 0 V4 H0 Z" fill="#bdbdbd"/></svg>
<svg class="a" style="left:40px;top:272px;" width="22" height="22" viewBox="0 0 22 22"><path d="M12 2 L17.5 7.5 L16.3 8.7 L15.3 8.4 L12.8 12.2 L13.6 15 L12.4 16.2 L5.6 9.4 L6.8 8.2 L9.6 9 L13.4 6.5 L13.1 5.5 L10.8 3.2 Z" fill="#d6d6d6" transform="rotate(8 11 11)"/><path d="M8.2 13.6 L2.6 19.4" stroke="#d6d6d6" stroke-width="1.6"/></svg><svg class="a" style="left:60.5px;top:289.5px;" width="4" height="4" viewBox="0 0 4 4"><path d="M4 0 V4 H0 Z" fill="#bdbdbd"/></svg>
<svg class="a" style="left:10px;top:296px;" width="22" height="22" viewBox="0 0 22 22"><g fill="none" stroke="#d6d6d6" stroke-width="1.2"><ellipse cx="8" cy="10" rx="6" ry="4.5"/><ellipse cx="12" cy="7.5" rx="5.5" ry="4"/></g><path d="M5 10 h1 M7.5 10 h1 M10 10 h1" stroke="#d6d6d6" stroke-width="1.2"/><path d="M13 8.5 V20 L15.8 17.3 L20.5 16.8 Z" fill="#cdcdcd"/></svg><svg class="a" style="left:30.5px;top:313.5px;" width="4" height="4" viewBox="0 0 4 4"><path d="M4 0 V4 H0 Z" fill="#bdbdbd"/></svg>
<svg class="a" style="left:40px;top:296px;" width="22" height="22" viewBox="0 0 22 22"><g fill="none" stroke="#d6d6d6" stroke-width="1.1"><path d="M2.5 3 V19 M2.5 3 L12.5 8.5 V14 L2.5 19 M6 5 V17.2 M9.3 6.8 V15.6 M2.5 8.4 L12.5 10.3 M2.5 13.7 L12.5 12.2"/></g><g stroke="#8a8a8a" stroke-width="1.1"><path d="M2.5 19 H20.5 M6 17 H18.5 M9.3 15.2 H16.5 M12.5 13.5 H15"/></g></svg><svg class="a" style="left:60.5px;top:313.5px;" width="4" height="4" viewBox="0 0 4 4"><path d="M4 0 V4 H0 Z" fill="#bdbdbd"/></svg>
<svg class="a" style="left:10px;top:325px;" width="22" height="22" viewBox="0 0 22 22"><g fill="none" stroke="#d6d6d6" stroke-width=".9"><rect x="3" y="4.2" width="16" height="13.8"/><path d="M3 9 C8 7 13 12 19 9.5 M3 14 C8 11.5 13 16.5 19 14 M8 4.2 C6 9 11 13 8.5 18 M14 4.2 C12 9 16.5 13 14.5 18"/></g></svg>
<svg class="a" style="left:40px;top:325px;" width="22" height="22" viewBox="0 0 22 22"><defs><linearGradient id="tgr" x1="0" x2="1" y1="0" y2="0"><stop offset="0" stop-color="#b4b4b4"/><stop offset="1" stop-color="#4c4c4c"/></linearGradient></defs><rect x="3" y="4.2" width="16" height="13.8" fill="url(#tgr)" stroke="#c8c8c8" stroke-width="1.1"/></svg>
<svg class="a" style="left:10px;top:349px;" width="22" height="22" viewBox="0 0 22 22"><path d="M14.5 2.3 C16.2 0.8 19 1.6 19.6 3.6 C20 5 19.5 6.2 18.4 7 L16.8 8.6 L17.6 9.4 L16.4 10.6 L11.2 5.4 L12.4 4.2 L13.2 5 Z" fill="#d6d6d6"/><path d="M12.6 7.6 L4.6 15.6 L3.4 18.8 L6.4 17.4 L14.4 9.4" fill="none" stroke="#d6d6d6" stroke-width="1.3"/></svg><svg class="a" style="left:30.5px;top:366.5px;" width="4" height="4" viewBox="0 0 4 4"><path d="M4 0 V4 H0 Z" fill="#bdbdbd"/></svg>
<div class="a" style="left:37px;top:349px;width:28.5px;height:22px;background:#2d2d2d;border-radius:3px"></div>
<svg class="a" style="left:40px;top:349px;" width="22" height="22" viewBox="0 0 22 22"><rect x="2" y="3.8" width="8" height="8" fill="#cfcfcf"/><circle cx="11" cy="11" r="4.2" fill="#8e8e8e" stroke="#535353" stroke-width=".8"/><circle cx="15.6" cy="14.2" r="3.7" fill="#2d2d2d" stroke="#d6d6d6" stroke-width="1.2"/></svg>
<svg class="a" style="left:10px;top:378px;" width="22" height="22" viewBox="0 0 22 22"><g fill="#d6d6d6"><rect x="1.6" y="3.2" width="1.8" height="1.8"/><rect x="4.6" y="3.2" width="1.8" height="1.8"/><rect x="7.6" y="3.2" width="1.8" height="1.8"/><rect x="1.6" y="6.2" width="1.8" height="1.8"/><rect x="4.6" y="6.2" width="1.8" height="1.8"/><rect x="1.6" y="9.2" width="1.8" height="1.8"/><rect x="12.4" y="2.6" width="4.4" height="2.2"/></g><g fill="none" stroke="#d6d6d6" stroke-width="1.2"><path d="M10.2 18.6 V8.4 L12.2 6 H17 L19 8.4 V18.6 Z"/><circle cx="14.6" cy="12.6" r="2.6"/></g><circle cx="14.6" cy="12.6" r="1.1" fill="#d6d6d6"/></svg><svg class="a" style="left:30.5px;top:395.5px;" width="4" height="4" viewBox="0 0 4 4"><path d="M4 0 V4 H0 Z" fill="#bdbdbd"/></svg>
<svg class="a" style="left:40px;top:378px;" width="22" height="22" viewBox="0 0 22 22"><path d="M2.6 3 V18.2 H20" fill="none" stroke="#d6d6d6" stroke-width="1.2"/><rect x="5.6" y="10.4" width="3.2" height="7.2" fill="#9a9a9a"/><rect x="10.6" y="4.4" width="3.4" height="13.2" fill="#d6d6d6"/><rect x="15.6" y="6.6" width="3.2" height="11" fill="#a8a8a8"/></svg><svg class="a" style="left:60.5px;top:395.5px;" width="4" height="4" viewBox="0 0 4 4"><path d="M4 0 V4 H0 Z" fill="#bdbdbd"/></svg>
<svg class="a" style="left:10px;top:407px;" width="22" height="22" viewBox="0 0 22 22"><path d="M6.2 1.6 V8 M1.2 6.2 H8" stroke="#d6d6d6" stroke-width="1.1"/><path d="M7.2 7.2 H14.4 L18.2 11 V18.4 H7.2 Z" fill="#818181" stroke="#d6d6d6" stroke-width="1.2"/><path d="M14.4 7.2 V11 H18.2" fill="none" stroke="#d6d6d6" stroke-width="1"/></svg>
<svg class="a" style="left:40px;top:407px;" width="22" height="22" viewBox="0 0 22 22"><path d="M2.8 19 L13.6 6.2 L17.4 9.6 Z" fill="none" stroke="#d6d6d6" stroke-width="1.2" stroke-linejoin="round"/><path d="M13.2 5.2 L15.4 2.2 L20 6.4 L17.8 9.4 Z" fill="#d6d6d6"/></svg><svg class="a" style="left:60.5px;top:424.5px;" width="4" height="4" viewBox="0 0 4 4"><path d="M4 0 V4 H0 Z" fill="#bdbdbd"/></svg>
<svg class="a" style="left:10px;top:431px;" width="22" height="22" viewBox="0 0 22 22"><path d="M7.2 19.4 C5.5 17 3.4 14.6 2.4 12.6 C2 11.4 3.4 10.8 4.4 11.8 L6.2 13.8 L5.4 6 C5.3 4.6 7.2 4.4 7.5 5.8 L8.6 11 L8.8 3.8 C8.9 2.4 10.9 2.4 11 3.8 L11.3 11 L12.6 4.6 C12.9 3.2 14.8 3.5 14.6 5 L13.9 11.6 L15.8 7.6 C16.4 6.4 18 7 17.6 8.4 L15.6 15 C15.2 17 14.6 18.4 13.8 19.4 Z" fill="#d6d6d6"/></svg><svg class="a" style="left:30.5px;top:448.5px;" width="4" height="4" viewBox="0 0 4 4"><path d="M4 0 V4 H0 Z" fill="#bdbdbd"/></svg>
<svg class="a" style="left:40px;top:431px;" width="22" height="22" viewBox="0 0 22 22"><circle cx="9" cy="8.8" r="5.8" fill="none" stroke="#d6d6d6" stroke-width="1.3"/><path d="M13.2 13 L19.2 19" stroke="#d6d6d6" stroke-width="2.4" stroke-linecap="round"/></svg>
<div class="a" style="left:6.5px;top:461.5px;width:35px;height:35px;background:#ffffff;border:1px solid #3c3c3c;box-sizing:border-box"></div>
<svg class="a" style="left:7px;top:462px;" width="34" height="34" viewBox="0 0 34 34"><path d="M0 34 L34 0" stroke="#ff1010" stroke-width="2.2"/></svg>
<div class="a" style="left:24px;top:479px;width:35.5px;height:35.5px;background:#ffffff;border:1px solid #3c3c3c;box-sizing:border-box"></div>
<div class="a" style="left:34px;top:489px;width:16px;height:16px;background:#4c4c4c;border:1px solid #303030;box-sizing:border-box"></div>
<svg class="a" style="left:50px;top:462px;" width="13" height="13" viewBox="0 0 13 13"><path d="M3.5 3.5 H7.5 Q9.5 3.5 9.5 5.5 V9.5" fill="none" stroke="#cfcfcf" stroke-width="1.4"/><path d="M4 0.8 L0.8 3.5 L4 6.2 Z M6.8 9 L9.5 12.2 L12.2 9 Z" fill="#cfcfcf"/></svg>
<svg class="a" style="left:6.5px;top:502.5px;" width="12" height="12" viewBox="0 0 12 12"><rect x="4.5" y="4.5" width="6.5" height="6.5" fill="#161616" stroke="#d8d8d8" stroke-width="1"/><rect x="2.8" y="2.8" width="0" height="0"/><rect x="0.8" y="0.8" width="7" height="7" fill="#ffffff" stroke="#2a2a2a" stroke-width="1"/></svg>
<div class="a" style="left:6.5px;top:521px;width:58px;height:20px;background:none;border:1px solid #5e5e5e;border-radius:3px;box-sizing:border-box"></div>
<div class="a" style="left:7px;top:521.5px;width:18.5px;height:19px;background:#3c3c3c;border-radius:2px 0 0 2px"></div>
<div class="a" style="left:25.5px;top:522px;width:1px;height:18px;background:#5e5e5e;"></div>
<div class="a" style="left:45px;top:522px;width:1px;height:18px;background:#5e5e5e;"></div>
<svg class="a" style="left:9px;top:524.5px;" width="14" height="14" viewBox="0 0 14 14"><rect x="1" y="1" width="12" height="12" fill="#ffffff" stroke="#101010" stroke-width="1"/><rect x="4" y="4" width="6" height="6" fill="#303030"/></svg>
<svg class="a" style="left:28.5px;top:524.5px;" width="14" height="14" viewBox="0 0 14 14"><defs><linearGradient id="tg2" x1="0" x2="1"><stop offset="0" stop-color="#fff"/><stop offset="1" stop-color="#1a1a1a"/></linearGradient></defs><rect x=".5" y=".5" width="13" height="13" fill="url(#tg2)" stroke="#151515"/></svg>
<svg class="a" style="left:48.5px;top:524.5px;" width="14" height="14" viewBox="0 0 14 14"><rect x=".5" y=".5" width="13" height="13" fill="#fff" stroke="#151515"/><path d="M1 13 L13 1" stroke="#ff1010" stroke-width="2.6"/></svg>
<div class="a" style="left:6.5px;top:546.5px;width:58px;height:18.5px;background:none;border:1px solid #5e5e5e;border-radius:3px;box-sizing:border-box"></div>
<div class="a" style="left:7px;top:547px;width:18.5px;height:17.5px;background:#3c3c3c;border-radius:2px 0 0 2px"></div>
<div class="a" style="left:25.5px;top:547.5px;width:1px;height:16.5px;background:#5e5e5e;"></div>
<div class="a" style="left:45px;top:547.5px;width:1px;height:16.5px;background:#5e5e5e;"></div>
<svg class="a" style="left:10px;top:549.5px;" width="13" height="13" viewBox="0 0 13 13"><circle cx="5" cy="5.2" r="3.6" fill="#8c8c8c" stroke="#d0d0d0" stroke-width="1.1"/><rect x="5.6" y="6" width="5.8" height="5.6" fill="#c8c8c8"/></svg>
<svg class="a" style="left:30px;top:549.5px;" width="13" height="13" viewBox="0 0 13 13"><rect x="5.6" y="6" width="5.8" height="5.6" fill="#b4b4b4"/><circle cx="5" cy="5.2" r="3.6" fill="#8c8c8c" stroke="#bdbdbd" stroke-width="1.1"/></svg>
<svg class="a" style="left:50px;top:549.5px;" width="13" height="13" viewBox="0 0 13 13"><circle cx="5.5" cy="5.5" r="3.6" fill="none" stroke="#666" stroke-width="1.1"/><path d="M5.5 5.5 H9 A3.6 3.6 0 0 1 5.5 9 Z" fill="#666"/></svg>
<svg class="a" style="left:24.5px;top:572px;" width="24" height="18" viewBox="0 0 24 18"><rect x=".6" y="6" width="13" height="10.8" fill="#7a7a7a" stroke="#c4c4c4" stroke-width="1.1"/><rect x="1.2" y="6.6" width="11.8" height="2.4" fill="#a8a8a8"/><rect x="8.8" y=".8" width="14" height="10.6" fill="#7a7a7a" stroke="#c4c4c4" stroke-width="1.1"/><rect x="9.4" y="1.4" width="12.8" height="2.4" fill="#a8a8a8"/></svg>
<div class="p" style="left:1612.5px;top:282px;width:256px;height:402px;background:#535353;border-radius:4px 4px 0 0;box-shadow:0 0 0 1px #383838,1px 2px 4px rgba(0,0,0,.35)"><div class="a" style="left:-1612.5px;top:-282px"><div class="a" style="left:1612.5px;top:282px;width:256px;height:13.8px;background:#454545;"></div><div class="a" style="left:1612.5px;top:295.8px;width:256px;height:16.5px;background:#474747;"></div><div class="a" style="left:1612.5px;top:295.3px;width:256px;height:1px;background:#3b3b3b;"></div><div class="a" style="left:1612.5px;top:311.3px;width:256px;height:1px;background:#3f3f3f;"></div><div class="a" style="left:1612.5px;top:675.5px;width:256px;height:8.5px;background:#4e4e4e;"></div><div class="a" style="left:1612.5px;top:675.5px;width:256px;height:1px;background:#3a3a3a;"></div><svg class="a" style="left:1730.5px;top:678px;" width="20" height="4" viewBox="0 0 20 4"><rect x="0" y="0" width="1" height="4" fill="#363636"/><rect x="2" y="0" width="1" height="4" fill="#363636"/><rect x="4" y="0" width="1" height="4" fill="#363636"/><rect x="6" y="0" width="1" height="4" fill="#363636"/><rect x="8" y="0" width="1" height="4" fill="#363636"/><rect x="10" y="0" width="1" height="4" fill="#363636"/><rect x="12" y="0" width="1" height="4" fill="#363636"/><rect x="14" y="0" width="1" height="4" fill="#363636"/><rect x="16" y="0" width="1" height="4" fill="#363636"/><rect x="18" y="0" width="1" height="4" fill="#363636"/></svg><svg class="a" style="left:1856.2px;top:285.8px;" width="8" height="8" viewBox="0 0 8 8"><path d="M1 1 L7 7 M7 1 L1 7" stroke="#d8d8d8" stroke-width="2" fill="none"/></svg><svg class="a" style="left:1856px;top:301px;" width="7" height="8" viewBox="0 0 7 8"><rect x="0" y="0" width="7" height="1" fill="#d0d0d0"/><rect x="0" y="2" width="7" height="1" fill="#d0d0d0"/><rect x="0" y="4" width="7" height="1" fill="#d0d0d0"/><rect x="0" y="6" width="7" height="1" fill="#d0d0d0"/></svg><div class="a" style="left:1619px;top:318px;width:244px;height:102px;background:#545454;border:1px solid #5d5d5d;border-radius:3px;box-sizing:border-box"></div><div class="a" style="left:1619px;top:439.5px;width:244px;height:216.5px;background:#545454;border:1px solid #5d5d5d;border-radius:3px;box-sizing:border-box"></div><svg class="a" style="left:1647.50px;top:577.94px;overflow:visible" width="26" height="17"><text x="0" y="14.50" font-size="12" font-weight="500" fill="#d2d2d2">大小</text></svg><span class="a" style="left:1675px;top:581px;font:normal 11px/14px 'Liberation Sans',sans-serif;color:#d2d2d2;white-space:pre;">:</span><div class="a" style="left:1692px;top:587.5px;width:6px;height:1px;background:#d2d2d2;"></div><svg class="a" style="left:1623.50px;top:596.54px;overflow:visible" width="50" height="17"><text x="0" y="14.50" font-size="12" font-weight="500" fill="#d2d2d2">创建日期</text></svg><span class="a" style="left:1675px;top:599.6px;font:normal 11px/14px 'Liberation Sans',sans-serif;color:#d2d2d2;white-space:pre;">:</span><div class="a" style="left:1692px;top:606.1px;width:6px;height:1px;background:#d2d2d2;"></div><svg class="a" style="left:1623.50px;top:615.74px;overflow:visible" width="50" height="17"><text x="0" y="14.50" font-size="12" font-weight="500" fill="#d2d2d2">修改日期</text></svg><span class="a" style="left:1675px;top:618.8px;font:normal 11px/14px 'Liberation Sans',sans-serif;color:#d2d2d2;white-space:pre;">:</span><div class="a" style="left:1692px;top:625.3px;width:6px;height:1px;background:#d2d2d2;"></div><svg class="a" style="left:1647.50px;top:634.74px;overflow:visible" width="26" height="17"><text x="0" y="14.50" font-size="12" font-weight="500" fill="#d2d2d2">透明</text></svg><span class="a" style="left:1675px;top:637.8px;font:normal 11px/14px 'Liberation Sans',sans-serif;color:#d2d2d2;white-space:pre;">:</span><div class="a" style="left:1692px;top:644.3px;width:6px;height:1px;background:#d2d2d2;"></div></div></div>
<div class="p" style="left:1640px;top:211.5px;width:215.5px;height:348.5px;background:#535353;border-radius:4px 4px 0 0;box-shadow:0 0 0 1px #383838,1px 2px 4px rgba(0,0,0,.35)"><div class="a" style="left:-1640px;top:-211.5px"><div class="a" style="left:1640px;top:211.5px;width:215.5px;height:13.5px;background:#454545;"></div><div class="a" style="left:1640px;top:225px;width:215.5px;height:17.5px;background:#474747;"></div><div class="a" style="left:1640px;top:224.5px;width:215.5px;height:1px;background:#3b3b3b;"></div><div class="a" style="left:1640px;top:241.5px;width:215.5px;height:1px;background:#3f3f3f;"></div><svg class="a" style="left:1823.5px;top:215.75px;" width="10" height="6" viewBox="0 0 10 6"><path d="M4.5 0 L4.5 6 L0.5 3 Z M9.5 0 L9.5 6 L5.5 3 Z" fill="#d8d8d8"/></svg><div class="a" style="left:1839px;top:213px;width:15px;height:11.5px;background:#5c5c5c;border-radius:2px"></div><svg class="a" style="left:1842.8px;top:214.95px;" width="8" height="8" viewBox="0 0 8 8"><path d="M1 1 L7 7 M7 1 L1 7" stroke="#d8d8d8" stroke-width="2" fill="none"/></svg><svg class="a" style="left:1838.5px;top:230.25px;" width="10" height="8" viewBox="0 0 10 8"><rect x="0" y="0" width="10" height="1" fill="#d0d0d0"/><rect x="0" y="2" width="10" height="1" fill="#d0d0d0"/><rect x="0" y="4" width="10" height="1" fill="#d0d0d0"/><rect x="0" y="6" width="10" height="1" fill="#d0d0d0"/></svg><div class="a" style="left:1700px;top:275px;width:58px;height:23.5px;background:none;border:1px solid #5c5c5c;border-radius:3px;box-sizing:border-box"></div><div class="a" style="left:1738.5px;top:276px;width:1px;height:21.5px;background:#5c5c5c;"></div><svg class="a" style="left:1741px;top:280px;" width="13" height="13" viewBox="0 0 13 13"><path d="M0 0 H12.5 V12.5 H0 Z M4 5 H7.5 V7.5 H4 Z" fill="#d4d4d4" fill-rule="evenodd"/><rect x="4.5" y="5.6" width="8" height="1.3" fill="#535353"/></svg><div class="a" style="left:1722px;top:266px;width:16.5px;height:33px;background:#555555;border-right:1px solid #3c3c3c;border-bottom:1px solid #3c3c3c;box-sizing:border-box"></div><svg class="a" style="left:1723px;top:277px;" width="6" height="12" viewBox="0 0 6 12"><rect x="0" y="0" width="4.6" height="11" fill="none" stroke="#b0b0b0" stroke-width="1"/><path d="M0 3.6 H4.6 M0 7.2 H4.6" stroke="#b0b0b0" stroke-width="1"/></svg><div class="a" style="left:1700px;top:302px;width:58px;height:21.5px;background:none;border:1px solid #5c5c5c;border-radius:3px;box-sizing:border-box"></div><div class="a" style="left:1736px;top:303px;width:1px;height:19.5px;background:#5c5c5c;"></div><svg class="a" style="left:1723px;top:307px;" width="8" height="12" viewBox="0 0 8 12"><path d="M0 0 H7.5 V4.5 H3.6 V12 H0 Z" fill="#d4d4d4"/></svg><svg class="a" style="left:1741px;top:306.5px;" width="13" height="13" viewBox="0 0 13 13"><path d="M12.5 0 V4.6 H8 Q4.8 4.8 4.6 8 V12.5 H0 V7 Q0.5 0.6 7 0 Z" fill="#d4d4d4"/><path d="M12.5 6.4 H9 Q6.6 6.6 6.4 9 V12.5" fill="none" stroke="#d4d4d4" stroke-width="1.3"/></svg><svg class="a" style="left:1766.50px;top:302.54px;overflow:visible" width="26" height="17"><text x="0" y="14.50" font-size="12" font-weight="500" fill="#d2d2d2">限制</text></svg><span class="a" style="left:1794px;top:305.6px;font:normal 11px/14px 'Liberation Sans',sans-serif;color:#d2d2d2;white-space:pre;">:</span><div class="a" style="left:1803px;top:303px;width:37px;height:19px;background:#454545;border:1px solid #5e5e5e;border-radius:3px;box-sizing:border-box"></div><svg class="a" style="left:1807.00px;top:302.31px;overflow:hidden" width="13" height="16"><text class="m" x="0" y="13.2" fill="#f0f0f0">10</text></svg><span class="a" style="left:1844.5px;top:305.5px;font:bold 11px/14px 'Liberation Serif',sans-serif;color:#c8c8c8;white-space:pre;">x</span><div class="a" style="left:1700px;top:329.5px;width:58px;height:21px;background:none;border:1px solid #5c5c5c;border-radius:3px;box-sizing:border-box"></div><div class="a" style="left:1735px;top:330.5px;width:1px;height:19px;background:#5c5c5c;"></div><svg class="a" style="left:1723px;top:334px;" width="7" height="12" viewBox="0 0 7 12"><path d="M0 4 H4 V8 H7 V12 H0 Z" fill="#8a8a8a"/><path d="M0 8.5 H7" stroke="#9e9e9e"/></svg><svg class="a" style="left:1741px;top:334px;" width="13" height="13" viewBox="0 0 13 13"><path d="M0 0 H5 V7.5 H12.5 V12.5 H0 Z" fill="#8c8c8c"/><path d="M6.6 2 V6 H10.5" fill="none" stroke="#a6a6a6" stroke-width="1.2"/></svg><div class="a" style="left:1700px;top:357px;width:150px;height:1px;background:#494949;"></div><div class="a" style="left:1773.5px;top:363.5px;width:76px;height:21px;background:none;border:1px solid #5e5e5e;border-radius:3px;box-sizing:border-box"></div><div class="a" style="left:1811px;top:364.5px;width:1px;height:19px;background:#5e5e5e;"></div><svg class="a" style="left:1778px;top:368px;" width="29" height="12" viewBox="0 0 29 12"><g stroke="#707070" stroke-width="1.4" fill="none"><path d="M1 1.2 H9 M13 1.2 H20 M27.6 1 V7 M1 6 V11.2 M6.5 11.2 H14.5 M18.5 11.2 H26"/></g></svg><svg class="a" style="left:1816px;top:368px;" width="29" height="12" viewBox="0 0 29 12"><g stroke="#707070" stroke-width="1.4" fill="none"><path d="M1 4 V1.2 H5 M10 1.2 H18 M23 1.2 H27.4 V4 M1 8 V11.2 H5 M10 11.2 H18 M23 11.2 H27.4 V8"/></g></svg><div class="a" style="left:1704px;top:390.6px;width:33.6px;height:20.2px;background:#5a5a5a;border-radius:2px"></div><div class="a" style="left:1741.2px;top:390.6px;width:33.6px;height:20.2px;background:#5a5a5a;border-radius:2px"></div><div class="a" style="left:1778.3px;top:390.6px;width:33.6px;height:20.2px;background:#5a5a5a;border-radius:2px"></div><div class="a" style="left:1815.2px;top:390.6px;width:33.6px;height:20.2px;background:#5a5a5a;border-radius:2px"></div><svg class="a" style="left:1709.60px;top:409.56px;overflow:visible" width="25" height="17"><text x="0" y="14.00" font-size="11.5" fill="#727272">虚线</text></svg><svg class="a" style="left:1747.00px;top:409.56px;overflow:visible" width="25" height="17"><text x="0" y="14.00" font-size="11.5" fill="#727272">间隙</text></svg><svg class="a" style="left:1783.60px;top:409.56px;overflow:visible" width="25" height="17"><text x="0" y="14.00" font-size="11.5" fill="#727272">虚线</text></svg><svg class="a" style="left:1821.00px;top:409.56px;overflow:visible" width="25" height="17"><text x="0" y="14.00" font-size="11.5" fill="#727272">间隙</text></svg><div class="a" style="left:1700px;top:431px;width:150px;height:1px;background:#494949;"></div><div class="a" style="left:1690px;top:439px;width:38px;height:19.2px;background:#eeeeee;border-radius:2px 0 0 2px"></div><div class="a" style="left:1690px;top:439px;width:38px;height:3px;background:#fafafa;"></div><div class="a" style="left:1694px;top:447.2px;width:29px;height:3px;background:#0c0c0c;"></div><div class="a" style="left:1728px;top:439px;width:18.3px;height:19.2px;background:#444444;border-radius:0 3px 3px 0"></div><svg class="a" style="left:1732.9px;top:446.4px;" width="8.5" height="5.2" viewBox="0 0 8.5 5.2"><path d="M1 1 L4.25 4.2 L7.5 1" fill="none" stroke="#e4e4e4" stroke-width="1.5" stroke-linecap="square"/></svg><div class="a" style="left:1754px;top:439px;width:37.2px;height:19.2px;background:#eeeeee;border-radius:2px 0 0 2px"></div><div class="a" style="left:1754px;top:439px;width:37.2px;height:3px;background:#fafafa;"></div><div class="a" style="left:1759px;top:447.2px;width:27px;height:3px;background:#0c0c0c;"></div><div class="a" style="left:1791.2px;top:439px;width:17.8px;height:19.2px;background:#444444;border-radius:0 3px 3px 0"></div><svg class="a" style="left:1795.85px;top:446.4px;" width="8.5" height="5.2" viewBox="0 0 8.5 5.2"><path d="M1 1 L4.25 4.2 L7.5 1" fill="none" stroke="#e4e4e4" stroke-width="1.5" stroke-linecap="square"/></svg><svg class="a" style="left:1830.5px;top:442.5px;" width="15" height="13" viewBox="0 0 15 13"><g fill="#707070"><path d="M2 2.6 H10 V0.4 L14.4 3.6 L10 6.8 V4.6 H2 Z"/><path d="M13 8.6 H5 V6.4 L0.6 9.6 L5 12.8 V10.6 H13 Z"/></g></svg><div class="a" style="left:1690px;top:468.6px;width:56.7px;height:20.2px;background:#595959;border-radius:2px"></div><div class="a" style="left:1708.5px;top:469px;width:1px;height:19.4px;background:#4f4f4f;"></div><svg class="a" style="left:1712.00px;top:468.81px;overflow:hidden" width="25" height="16"><text class="m" x="0" y="13.2" fill="#747474">100%</text></svg><svg class="a" style="left:1698.5px;top:471px;" width="10" height="16" viewBox="0 0 10 16"><path d="M6 1 L9.5 4.6 M6 14 L9.5 10.6" stroke="#707070" stroke-width="1.2" fill="none"/></svg><div class="a" style="left:1753.3px;top:468.6px;width:56.7px;height:20.2px;background:#595959;border-radius:2px"></div><div class="a" style="left:1771.3px;top:469px;width:1px;height:19.4px;background:#4f4f4f;"></div><svg class="a" style="left:1757.5px;top:471px;" width="10" height="16" viewBox="0 0 10 16"><path d="M1.5 5 L5 1.6 L8.5 5 M1.5 10.6 L5 14 L8.5 10.6" stroke="#707070" stroke-width="1.2" fill="none"/></svg><svg class="a" style="left:1775.40px;top:468.81px;overflow:hidden" width="25" height="16"><text class="m" x="0" y="13.2" fill="#747474">100%</text></svg><svg class="a" style="left:1829px;top:470.5px;" width="17" height="17" viewBox="0 0 17 17"><g fill="none" stroke="#707070" stroke-width="1.5"><path d="M5.5 6.5 V4.2 a3 3 0 0 1 6 0 V6.5 M5.5 10 V12.4 a3 3 0 0 0 6 0 V10"/><path d="M1 1 L15.5 15.5" stroke-width="1.2"/></g></svg><div class="a" style="left:1690px;top:497.7px;width:44.8px;height:20.8px;background:none;border:1px solid #5c5c5c;border-radius:3px;box-sizing:border-box"></div><div class="a" style="left:1712.5px;top:498.7px;width:1px;height:18.8px;background:#5c5c5c;"></div><svg class="a" style="left:1700px;top:503px;" width="8" height="10" viewBox="0 0 8 10"><path d="M0 0 V10 L7 5 Z" fill="#707070"/></svg><svg class="a" style="left:1717px;top:502px;" width="13" height="12" viewBox="0 0 13 12"><path d="M0 2.5 H12 M12 0.5 V4.5" stroke="#707070" stroke-width="1.1" fill="none"/><path d="M0 7.5 H7 V5 L12.5 8.2 L7 11.4 V9 H0 Z" fill="#707070"/></svg><div class="a" style="left:1700px;top:524.5px;width:150px;height:1px;background:#494949;"></div><div class="a" style="left:1690px;top:532.7px;width:88.2px;height:19.3px;background:#eeeeee;"></div><div class="a" style="left:1690px;top:532.7px;width:88.2px;height:3px;background:#fafafa;"></div><div class="a" style="left:1692px;top:540.8px;width:52px;height:3.2px;background:#0c0c0c;"></div><svg class="a" style="left:1749.50px;top:532.75px;overflow:visible" width="25" height="17"><text x="0" y="14.00" font-size="11.5" fill="#303030">等比</text></svg><div class="a" style="left:1778.2px;top:532.7px;width:17.8px;height:19.3px;background:#444444;border-radius:0 3px 3px 0"></div><svg class="a" style="left:1782.75px;top:540.4px;" width="8.5" height="5.2" viewBox="0 0 8.5 5.2"><path d="M1 1 L4.25 4.2 L7.5 1" fill="none" stroke="#e4e4e4" stroke-width="1.5" stroke-linecap="square"/></svg><svg class="a" style="left:1807px;top:536px;" width="14" height="13" viewBox="0 0 14 13"><path d="M0.6 1.5 V11.5 L5 6.5 Z" fill="none" stroke="#707070" stroke-width="1"/><path d="M13.4 1.5 V11.5 L9 6.5 Z" fill="#707070"/><path d="M7 0 V13" stroke="#707070" stroke-width="1" stroke-dasharray="1.2 1.2"/></svg><svg class="a" style="left:1832px;top:536px;" width="11" height="14" viewBox="0 0 11 14"><path d="M1 0.6 H10 L5.5 5 Z" fill="#707070"/><path d="M1 13.4 H10 L5.5 9 Z" fill="none" stroke="#707070" stroke-width="1"/><path d="M0 7 H11" stroke="#707070" stroke-width="1" stroke-dasharray="1.2 1.2"/></svg></div></div>
<div class="p" style="left:1660px;top:128px;width:129.7px;height:138.4px;background:#535353;border-radius:4px 4px 0 0;box-shadow:0 0 0 1px #383838,1px 2px 4px rgba(0,0,0,.35)"><div class="a" style="left:-1660px;top:-128px"><div class="a" style="left:1660px;top:128px;width:129.7px;height:13.6px;background:#454545;"></div><div class="a" style="left:1660px;top:141.6px;width:129.7px;height:18px;background:#474747;"></div><div class="a" style="left:1660px;top:141.1px;width:129.7px;height:1px;background:#3b3b3b;"></div><div class="a" style="left:1660px;top:158.6px;width:129.7px;height:1px;background:#3f3f3f;"></div><svg class="a" style="left:1757.7px;top:132.3px;" width="10" height="6" viewBox="0 0 10 6"><path d="M4.5 0 L4.5 6 L0.5 3 Z M9.5 0 L9.5 6 L5.5 3 Z" fill="#d8d8d8"/></svg><svg class="a" style="left:1777px;top:131.5px;" width="8" height="8" viewBox="0 0 8 8"><path d="M1 1 L7 7 M7 1 L1 7" stroke="#d8d8d8" stroke-width="2" fill="none"/></svg><svg class="a" style="left:1772.7px;top:147.1px;" width="10" height="8" viewBox="0 0 10 8"><rect x="0" y="0" width="10" height="1" fill="#d0d0d0"/><rect x="0" y="2" width="10" height="1" fill="#d0d0d0"/><rect x="0" y="4" width="10" height="1" fill="#d0d0d0"/><rect x="0" y="6" width="10" height="1" fill="#d0d0d0"/></svg><div class="a" style="left:1726px;top:188px;width:58px;height:20px;background:#595959;border-radius:2px"></div><svg class="a" style="left:1743.00px;top:187.94px;overflow:visible" width="26" height="17"><text x="0" y="14.50" font-size="12" fill="#6c6c6c">扩展</text></svg><svg class="a" style="left:1722.5px;top:241px;" width="14" height="14" viewBox="0 0 14 14"><g fill="none" stroke="#cfcfcf" stroke-width="1.1"><rect x="-3" y="0.6" width="8" height="8"/><rect x="4" y="5" width="8.5" height="8.5"/><path d="M0 5 H5 V8.6 M0 8.6 H2"/></g></svg><svg class="a" style="left:1759.5px;top:241px;" width="15" height="15" viewBox="0 0 15 15"><rect x="0.7" y="0.7" width="9" height="9" fill="none" stroke="#d4d4d4" stroke-width="1.3"/><rect x="5" y="5" width="9.5" height="9.5" fill="#d4d4d4"/><rect x="5" y="5" width="4" height="4" fill="#8a8a8a"/></svg></div></div>
<div class="p" style="left:1460.5px;top:250px;width:238.5px;height:331px;background:#535353;border-radius:4px 4px 0 0;box-shadow:0 0 0 1px #383838,1px 2px 4px rgba(0,0,0,.35)"><div class="a" style="left:-1460.5px;top:-250px"><div class="a" style="left:1460.5px;top:250px;width:238.5px;height:13.5px;background:#454545;"></div><div class="a" style="left:1460.5px;top:263.5px;width:238.5px;height:18px;background:#474747;"></div><div class="a" style="left:1460.5px;top:263px;width:238.5px;height:1px;background:#3b3b3b;"></div><div class="a" style="left:1460.5px;top:280.5px;width:238.5px;height:1px;background:#3f3f3f;"></div><svg class="a" style="left:1667px;top:254.25px;" width="10" height="6" viewBox="0 0 10 6"><path d="M4.5 0 L4.5 6 L0.5 3 Z M9.5 0 L9.5 6 L5.5 3 Z" fill="#d8d8d8"/></svg><svg class="a" style="left:1686.3px;top:253.45px;" width="8" height="8" viewBox="0 0 8 8"><path d="M1 1 L7 7 M7 1 L1 7" stroke="#d8d8d8" stroke-width="2" fill="none"/></svg><svg class="a" style="left:1682px;top:269px;" width="10" height="8" viewBox="0 0 10 8"><rect x="0" y="0" width="10" height="1" fill="#d0d0d0"/><rect x="0" y="2" width="10" height="1" fill="#d0d0d0"/><rect x="0" y="4" width="10" height="1" fill="#d0d0d0"/><rect x="0" y="6" width="10" height="1" fill="#d0d0d0"/></svg><div class="a" style="left:1460.5px;top:572.5px;width:238.5px;height:8.5px;background:#4e4e4e;"></div><div class="a" style="left:1460.5px;top:572.5px;width:238.5px;height:1px;background:#3a3a3a;"></div><svg class="a" style="left:1569.75px;top:575px;" width="20" height="4" viewBox="0 0 20 4"><rect x="0" y="0" width="1" height="4" fill="#363636"/><rect x="2" y="0" width="1" height="4" fill="#363636"/><rect x="4" y="0" width="1" height="4" fill="#363636"/><rect x="6" y="0" width="1" height="4" fill="#363636"/><rect x="8" y="0" width="1" height="4" fill="#363636"/><rect x="10" y="0" width="1" height="4" fill="#363636"/><rect x="12" y="0" width="1" height="4" fill="#363636"/><rect x="14" y="0" width="1" height="4" fill="#363636"/><rect x="16" y="0" width="1" height="4" fill="#363636"/><rect x="18" y="0" width="1" height="4" fill="#363636"/></svg><div class="a" style="left:1466.7px;top:318.4px;width:226.6px;height:234.4px;background:#545454;border:1px solid #5f5f5f;border-radius:3px;box-sizing:border-box"></div><div class="a" style="left:1475px;top:309px;width:7px;height:1.5px;background:#cfcfcf;"></div><svg class="a" style="left:1472.5px;top:557.5px;" width="12" height="12" viewBox="0 0 12 12"><rect x=".8" y=".8" width="10.4" height="10.4" fill="#3a3a3a" stroke="#dadada" stroke-width="1.6"/><rect x="3.4" y="3.4" width="5.2" height="5.2" fill="#202020"/></svg><svg class="a" style="left:1499px;top:557.5px;" width="12" height="12" viewBox="0 0 12 12"><rect x=".6" y=".6" width="10.8" height="10.8" fill="none" stroke="#dadada" stroke-width="1.2"/><rect x="2.8" y="2.8" width="6.4" height="6.4" fill="#c8c8c8"/></svg><span class="a" style="left:1525px;top:554px;font:italic 14px/18px 'Liberation Sans',sans-serif;color:#d6d6d6;white-space:pre;">fx</span><svg class="a" style="left:1536.5px;top:567px;" width="4" height="3" viewBox="0 0 4 3"><path d="M0 0 H4 L2 2.6 Z" fill="#d6d6d6"/></svg><svg class="a" style="left:1607px;top:557.5px;" width="13" height="13" viewBox="0 0 13 13"><circle cx="6.5" cy="6.5" r="5" fill="none" stroke="#dcdcdc" stroke-width="1.8"/><path d="M3 3 L10 10" stroke="#dcdcdc" stroke-width="1.8"/><path d="M8.6 2.6 L10.4 4.4 M2.6 8.6 L4.4 10.4" stroke="#9a9a9a" stroke-width="1"/></svg><svg class="a" style="left:1634.5px;top:558px;" width="11" height="11" viewBox="0 0 11 11"><path d="M0 0 H10.5 V10.5 H4 V6 H0 Z" fill="#6a6a6a"/></svg><svg class="a" style="left:1660px;top:557px;" width="11" height="13" viewBox="0 0 11 13"><g fill="none" stroke="#6c6c6c" stroke-width="1.1"><path d="M0.5 2.6 H10.5 M3.6 2.4 V0.8 H7.4 V2.4 M1.6 3 V12.2 H9.4 V3 M4 5 V10.4 M5.5 5 V10.4 M7 5 V10.4"/></g></svg></div></div>
<div class="p" style="left:1491.5px;top:89.2px;width:231px;height:325.8px;background:#535353;border-radius:4px 4px 0 0;box-shadow:0 0 0 1px #383838,1px 2px 4px rgba(0,0,0,.35)"><div class="a" style="left:-1491.5px;top:-89.2px"><div class="a" style="left:1491.5px;top:89.2px;width:231px;height:13.6px;background:#454545;"></div><div class="a" style="left:1491.5px;top:102.8px;width:231px;height:17.4px;background:#474747;"></div><div class="a" style="left:1491.5px;top:102.3px;width:231px;height:1px;background:#3b3b3b;"></div><div class="a" style="left:1491.5px;top:119.2px;width:231px;height:1px;background:#3f3f3f;"></div><svg class="a" style="left:1690.5px;top:93.5px;" width="10" height="6" viewBox="0 0 10 6"><path d="M4.5 0 L4.5 6 L0.5 3 Z M9.5 0 L9.5 6 L5.5 3 Z" fill="#d8d8d8"/></svg><svg class="a" style="left:1709.8px;top:92.7px;" width="8" height="8" viewBox="0 0 8 8"><path d="M1 1 L7 7 M7 1 L1 7" stroke="#d8d8d8" stroke-width="2" fill="none"/></svg><svg class="a" style="left:1705.5px;top:108px;" width="10" height="8" viewBox="0 0 10 8"><rect x="0" y="0" width="10" height="1" fill="#d0d0d0"/><rect x="0" y="2" width="10" height="1" fill="#d0d0d0"/><rect x="0" y="4" width="10" height="1" fill="#d0d0d0"/><rect x="0" y="6" width="10" height="1" fill="#d0d0d0"/></svg><div class="a" style="left:1636.6px;top:127.3px;width:79.8px;height:20.2px;background:#474747;border:1px solid #5e5e5e;border-radius:3px;box-sizing:border-box"></div><div class="a" style="left:1698.6px;top:128.3px;width:1px;height:18.2px;background:#5a5a5a;"></div><svg class="a" style="left:1703px;top:135.05px;" width="8.4" height="5.3" viewBox="0 0 8.4 5.3"><path d="M1 1 L4.2 4.3 L7.4 1" fill="none" stroke="#e6e6e6" stroke-width="1.35" stroke-linecap="square"/></svg><div class="a" style="left:1636.6px;top:153.4px;width:79.8px;height:19.9px;background:#474747;border:1px solid #5e5e5e;border-radius:3px;box-sizing:border-box"></div><div class="a" style="left:1698.6px;top:154.4px;width:1px;height:17.9px;background:#5a5a5a;"></div><svg class="a" style="left:1703px;top:161px;" width="8.4" height="5.3" viewBox="0 0 8.4 5.3"><path d="M1 1 L4.2 4.3 L7.4 1" fill="none" stroke="#e6e6e6" stroke-width="1.35" stroke-linecap="square"/></svg><div class="a" style="left:1636.6px;top:186.6px;width:79.8px;height:19.4px;background:#474747;border:1px solid #5e5e5e;border-radius:3px;box-sizing:border-box"></div><div class="a" style="left:1698.6px;top:187.6px;width:1px;height:17.4px;background:#5a5a5a;"></div><svg class="a" style="left:1703px;top:193.95px;" width="8.4" height="5.3" viewBox="0 0 8.4 5.3"><path d="M1 1 L4.2 4.3 L7.4 1" fill="none" stroke="#e6e6e6" stroke-width="1.35" stroke-linecap="square"/></svg><div class="a" style="left:1636.6px;top:213px;width:79.8px;height:18.6px;background:#474747;border:1px solid #5e5e5e;border-radius:3px;box-sizing:border-box"></div><div class="a" style="left:1698.6px;top:214px;width:1px;height:16.6px;background:#5a5a5a;"></div><svg class="a" style="left:1703px;top:219.95px;" width="8.4" height="5.3" viewBox="0 0 8.4 5.3"><path d="M1 1 L4.2 4.3 L7.4 1" fill="none" stroke="#e6e6e6" stroke-width="1.35" stroke-linecap="square"/></svg><div class="a" style="left:1636.6px;top:238.8px;width:79.8px;height:19.2px;background:#474747;border:1px solid #5e5e5e;border-radius:3px;box-sizing:border-box"></div><div class="a" style="left:1698.6px;top:239.8px;width:1px;height:17.2px;background:#5a5a5a;"></div><svg class="a" style="left:1703px;top:246.05px;" width="8.4" height="5.3" viewBox="0 0 8.4 5.3"><path d="M1 1 L4.2 4.3 L7.4 1" fill="none" stroke="#e6e6e6" stroke-width="1.35" stroke-linecap="square"/></svg><div class="a" style="left:1497px;top:180px;width:219.5px;height:1px;background:#494949;"></div><div class="a" style="left:1497px;top:264.5px;width:219.5px;height:1px;background:#494949;"></div><svg class="a" style="left:1659.50px;top:186.31px;overflow:hidden" width="38" height="16"><text class="m" x="0" y="13.2" fill="#f0f0f0">(14.4 pt)</text></svg><svg class="a" style="left:1658.00px;top:212.11px;overflow:hidden" width="25" height="16"><text class="m" x="0" y="13.2" fill="#f0f0f0">100%</text></svg><svg class="a" style="left:1657.50px;top:238.31px;overflow:hidden" width="7" height="16"><text class="m" x="0" y="13.2" fill="#f0f0f0">0</text></svg><div class="a" style="left:1518.8px;top:298px;width:79.4px;height:19px;background:#474747;border:1px solid #5e5e5e;border-radius:3px;box-sizing:border-box"></div><svg class="a" style="left:1526.50px;top:297.44px;overflow:visible" width="26" height="17"><text x="0" y="14.50" font-size="12" font-weight="500" fill="#f0f0f0">自动</text></svg><svg class="a" style="left:1584.8px;top:305.35px;" width="8.4" height="5.3" viewBox="0 0 8.4 5.3"><path d="M1 1 L4.2 4.3 L7.4 1" fill="none" stroke="#e6e6e6" stroke-width="1.35" stroke-linecap="square"/></svg><svg class="a" style="left:1498px;top:309px;" width="8" height="7" viewBox="0 0 8 7"><path d="M0 3.5 H6.5 M4 1 L6.8 3.5 L4 6" fill="none" stroke="#cfcfcf" stroke-width="1.1"/></svg><svg class="a" style="left:1626.5px;top:309px;" width="8" height="7" viewBox="0 0 8 7"><path d="M8 3.5 H1.5 M4 1 L1.2 3.5 L4 6" fill="none" stroke="#cfcfcf" stroke-width="1.1"/></svg><div class="a" style="left:1636.6px;top:298px;width:79.8px;height:19px;background:#474747;border:1px solid #5e5e5e;border-radius:3px;box-sizing:border-box"></div><svg class="a" style="left:1644.50px;top:297.44px;overflow:visible" width="26" height="17"><text x="0" y="14.50" font-size="12" font-weight="500" fill="#f0f0f0">自动</text></svg><svg class="a" style="left:1703px;top:305.35px;" width="8.4" height="5.3" viewBox="0 0 8.4 5.3"><path d="M1 1 L4.2 4.3 L7.4 1" fill="none" stroke="#e6e6e6" stroke-width="1.35" stroke-linecap="square"/></svg><div class="a" style="left:1497px;top:323px;width:219.5px;height:1px;background:#494949;"></div><span class="a" style="left:1497.5px;top:330.669px;font:normal 12.5px/16px 'Liberation Sans',sans-serif;color:#d0d0d0;white-space:pre;">A</span><span class="a" style="left:1506.7px;top:331.055px;font:normal 8.5px/11px 'Liberation Sans',sans-serif;color:#d0d0d0;white-space:pre;">a</span><svg class="a" style="left:1497.5px;top:332.5px;" width="17" height="17" viewBox="0 0 17 17"><path d="M0 12.5 H8.6 M9.6 8.4 H14.6" stroke="#d0d0d0" stroke-width="1"/><path d="M12.2 16 V10.4 M10 12.6 L12.2 10.2 L14.4 12.6" fill="none" stroke="#d0d0d0" stroke-width="1"/></svg><div class="a" style="left:1518.8px;top:330.4px;width:79.4px;height:19.9px;background:#474747;border:1px solid #5e5e5e;border-radius:3px;box-sizing:border-box"></div><div class="a" style="left:1580.6px;top:331.4px;width:1px;height:17.9px;background:#5a5a5a;"></div><div class="a" style="left:1536.4px;top:331.4px;width:1px;height:18px;background:#5a5a5a;"></div><svg class="a" style="left:1522.6px;top:331.4px;" width="10" height="18" viewBox="0 0 10 18"><path d="M1.5 6.5 L5 3 L8.5 6.5 M1.5 11.5 L5 15 L8.5 11.5" fill="none" stroke="#cfcfcf" stroke-width="1.3"/></svg><svg class="a" style="left:1539.50px;top:329.91px;overflow:hidden" width="25" height="16"><text class="m" x="0" y="13.2" fill="#f0f0f0">0 pt</text></svg><svg class="a" style="left:1584.8px;top:338.15px;" width="8.4" height="5.3" viewBox="0 0 8.4 5.3"><path d="M1 1 L4.2 4.3 L7.4 1" fill="none" stroke="#e6e6e6" stroke-width="1.35" stroke-linecap="square"/></svg><svg class="a" style="left:1615px;top:331px;" width="18" height="18" viewBox="0 0 18 18"><circle cx="9" cy="9.6" r="7.4" fill="none" stroke="#cfcfcf" stroke-width="1.2"/><path d="M7.5 1.2 L11 2.2 L8.4 4.4" fill="none" stroke="#cfcfcf" stroke-width="1"/></svg><span class="a" style="left:1624px;top:333.719px;font:normal 11.5px/14px 'Liberation Serif',sans-serif;color:#d6d6d6;white-space:pre;transform:translateX(-50%);">T</span><div class="a" style="left:1636.6px;top:330.4px;width:79.8px;height:19.9px;background:#474747;border:1px solid #5e5e5e;border-radius:3px;box-sizing:border-box"></div><div class="a" style="left:1698.6px;top:331.4px;width:1px;height:17.9px;background:#5a5a5a;"></div><div class="a" style="left:1654.2px;top:331.4px;width:1px;height:18px;background:#5a5a5a;"></div><svg class="a" style="left:1640.4px;top:331.4px;" width="10" height="18" viewBox="0 0 10 18"><path d="M1.5 6.5 L5 3 L8.5 6.5 M1.5 11.5 L5 15 L8.5 11.5" fill="none" stroke="#cfcfcf" stroke-width="1.3"/></svg><svg class="a" style="left:1657.00px;top:329.91px;overflow:hidden" width="13" height="16"><text class="m" x="0" y="13.2" fill="#f0f0f0">0°</text></svg><svg class="a" style="left:1703px;top:338.15px;" width="8.4" height="5.3" viewBox="0 0 8.4 5.3"><path d="M1 1 L4.2 4.3 L7.4 1" fill="none" stroke="#e6e6e6" stroke-width="1.35" stroke-linecap="square"/></svg><div class="a" style="left:1497px;top:356.2px;width:219.5px;height:1px;background:#494949;"></div><span class="a" style="left:1500.3px;top:360.8px;font:bold 14.5px/18px 'Liberation Serif',sans-serif;color:#cdcdcd;white-space:pre;">TT</span><span class="a" style="left:1531.5px;top:360.8px;font:bold 14.5px/18px 'Liberation Serif',sans-serif;color:#cdcdcd;white-space:pre;">T</span><span class="a" style="left:1540.8px;top:364.9px;font:bold 10.5px/13px 'Liberation Serif',sans-serif;color:#cdcdcd;white-space:pre;">T</span><span class="a" style="left:1586px;top:360.8px;font:bold 14.5px/18px 'Liberation Serif',sans-serif;color:#bdbdbd;white-space:pre;">T</span><span class="a" style="left:1596.5px;top:360.8px;font:bold 6.5px/8px 'Liberation Serif',sans-serif;color:#cdcdcd;white-space:pre;">1</span><span class="a" style="left:1615px;top:360.8px;font:bold 14.5px/18px 'Liberation Serif',sans-serif;color:#cdcdcd;white-space:pre;">T</span><span class="a" style="left:1625px;top:371px;font:bold 6.5px/8px 'Liberation Serif',sans-serif;color:#cdcdcd;white-space:pre;">1</span><span class="a" style="left:1671.2px;top:360.3px;font:bold 13.5px/17px 'Liberation Serif',sans-serif;color:#cdcdcd;white-space:pre;">T</span><div class="a" style="left:1670.5px;top:376.3px;width:10.5px;height:1.2px;background:#cdcdcd;"></div><span class="a" style="left:1701.5px;top:361.3px;font:bold 13.5px/17px 'Liberation Serif',sans-serif;color:#cdcdcd;white-space:pre;">T</span><div class="a" style="left:1700px;top:368.5px;width:11.5px;height:1.1px;background:#cdcdcd;"></div><div class="a" style="left:1497px;top:382.2px;width:219.5px;height:1px;background:#494949;"></div><div class="a" style="left:1498px;top:390px;width:100.2px;height:19px;background:#474747;border:1px solid #5e5e5e;border-radius:3px;box-sizing:border-box"></div><svg class="a" style="left:1504.20px;top:389.64px;overflow:visible" width="26" height="17"><text x="0" y="14.50" font-size="12" font-weight="500" fill="#f0f0f0">英语</text></svg><span class="a" style="left:1534px;top:392.4px;font:normal 11px/14px 'Liberation Sans',sans-serif;color:#f0f0f0;white-space:pre;">:</span><svg class="a" style="left:1542.50px;top:389.64px;overflow:visible" width="26" height="17"><text x="0" y="14.50" font-size="12" font-weight="500" fill="#f0f0f0">美国</text></svg><svg class="a" style="left:1584.8px;top:397.35px;" width="8.4" height="5.3" viewBox="0 0 8.4 5.3"><path d="M1 1 L4.2 4.3 L7.4 1" fill="none" stroke="#e6e6e6" stroke-width="1.35" stroke-linecap="square"/></svg><span class="a" style="left:1615.5px;top:391.882px;font:normal 9px/11px 'Liberation Sans',sans-serif;color:#c4c4c4;white-space:pre;">a</span><span class="a" style="left:1621.5px;top:394.188px;font:bold 11px/14px 'Liberation Sans',sans-serif;color:#d8d8d8;white-space:pre;">a</span><div class="a" style="left:1636.6px;top:390px;width:79.8px;height:19px;background:#474747;border:1px solid #5e5e5e;border-radius:3px;box-sizing:border-box"></div><svg class="a" style="left:1703px;top:397.35px;" width="8.4" height="5.3" viewBox="0 0 8.4 5.3"><path d="M1 1 L4.2 4.3 L7.4 1" fill="none" stroke="#e6e6e6" stroke-width="1.35" stroke-linecap="square"/></svg></div></div>
<div class="p" style="left:1417px;top:101px;width:239.5px;height:207.5px;background:#535353;border-radius:4px 4px 0 0;box-shadow:0 0 0 1px #383838,1px 2px 4px rgba(0,0,0,.35)"><div class="a" style="left:-1417px;top:-101px"><div class="a" style="left:1417px;top:101px;width:239.5px;height:13.7px;background:#454545;"></div><div class="a" style="left:1417px;top:114.7px;width:239.5px;height:17.8px;background:#474747;"></div><div class="a" style="left:1417px;top:114.2px;width:239.5px;height:1px;background:#3b3b3b;"></div><div class="a" style="left:1417px;top:131.5px;width:239.5px;height:1px;background:#3f3f3f;"></div><svg class="a" style="left:1624.5px;top:105.35px;" width="10" height="6" viewBox="0 0 10 6"><path d="M4.5 0 L4.5 6 L0.5 3 Z M9.5 0 L9.5 6 L5.5 3 Z" fill="#d8d8d8"/></svg><svg class="a" style="left:1643.8px;top:104.55px;" width="8" height="8" viewBox="0 0 8 8"><path d="M1 1 L7 7 M7 1 L1 7" stroke="#d8d8d8" stroke-width="2" fill="none"/></svg><svg class="a" style="left:1639.5px;top:120.1px;" width="10" height="8" viewBox="0 0 10 8"><rect x="0" y="0" width="10" height="1" fill="#d0d0d0"/><rect x="0" y="2" width="10" height="1" fill="#d0d0d0"/><rect x="0" y="4" width="10" height="1" fill="#d0d0d0"/><rect x="0" y="6" width="10" height="1" fill="#d0d0d0"/></svg><div class="a" style="left:1417px;top:300px;width:239.5px;height:8.5px;background:#4e4e4e;"></div><div class="a" style="left:1417px;top:300px;width:239.5px;height:1px;background:#3a3a3a;"></div><svg class="a" style="left:1526.75px;top:302.5px;" width="20" height="4" viewBox="0 0 20 4"><rect x="0" y="0" width="1" height="4" fill="#363636"/><rect x="2" y="0" width="1" height="4" fill="#363636"/><rect x="4" y="0" width="1" height="4" fill="#363636"/><rect x="6" y="0" width="1" height="4" fill="#363636"/><rect x="8" y="0" width="1" height="4" fill="#363636"/><rect x="10" y="0" width="1" height="4" fill="#363636"/><rect x="12" y="0" width="1" height="4" fill="#363636"/><rect x="14" y="0" width="1" height="4" fill="#363636"/><rect x="16" y="0" width="1" height="4" fill="#363636"/><rect x="18" y="0" width="1" height="4" fill="#363636"/></svg><div class="a" style="left:1417px;top:114.7px;width:45px;height:18.5px;background:#535353;"></div><svg class="a" style="left:1431.50px;top:114.41px;overflow:visible" width="27" height="18"><text x="0" y="14.70" font-size="12.2" font-weight="500" fill="#e6e6e6">颜色</text></svg><div class="a" style="left:1462px;top:114.7px;width:39px;height:16.8px;background:#4b4b4b;"></div><div class="a" style="left:1500px;top:114.7px;width:1px;height:16.8px;background:#404040;"></div><svg class="a" style="left:1469.50px;top:114.41px;overflow:visible" width="27" height="18"><text x="0" y="14.70" font-size="12.2" fill="#9c9c9c">属性</text></svg><div class="a" style="left:1501px;top:114.7px;width:38px;height:16.8px;background:#4b4b4b;"></div><div class="a" style="left:1538px;top:114.7px;width:1px;height:16.8px;background:#404040;"></div><svg class="a" style="left:1509.50px;top:114.41px;overflow:visible" width="15" height="18"><text x="0" y="14.70" font-size="12.2" fill="#9c9c9c">库</text></svg><svg class="a" style="left:1420.2px;top:118.5px;" width="6" height="11" viewBox="0 0 6 11"><path d="M.8 4 L3 1.5 L5.2 4 M.8 7 L3 9.5 L5.2 7" fill="none" stroke="#d0d0d0" stroke-width="1.1"/></svg><svg class="a" style="left:1423.5px;top:139.5px;" width="12" height="12" viewBox="0 0 12 12"><rect x="4.2" y="4.2" width="6.8" height="6.8" fill="#141414" stroke="#d8d8d8" stroke-width="1"/><rect x="0.8" y="0.8" width="6.8" height="6.8" fill="#ffffff" stroke="#222" stroke-width="1"/></svg><svg class="a" style="left:1443.5px;top:140.5px;" width="12" height="12" viewBox="0 0 12 12"><path d="M3 3 H6.8 Q8.8 3 8.8 5 V9" fill="none" stroke="#cfcfcf" stroke-width="1.3"/><path d="M3.6 0.4 L0.6 3 L3.6 5.6 Z M6.2 8.4 L8.8 11.6 L11.4 8.4 Z" fill="#cfcfcf"/></svg><div class="a" style="left:1423.5px;top:157.5px;width:18.5px;height:18.5px;background:#fff;border:1px solid #3a3a3a;box-sizing:border-box"></div><svg class="a" style="left:1424px;top:158px;" width="17.5" height="17.5" viewBox="0 0 17.5 17.5"><path d="M0 17.5 L17.5 0" stroke="#ff1010" stroke-width="1.8"/></svg><div class="a" style="left:1433.3px;top:167.3px;width:19px;height:19px;background:#fff;border:1px solid #3a3a3a;box-sizing:border-box"></div><div class="a" style="left:1438.8px;top:172.8px;width:8px;height:8px;background:#4a4a4a;border:1px solid #2c2c2c;box-sizing:border-box"></div><span class="a" style="left:1470.5px;top:145px;font:bold 11.5px/14px 'Liberation Serif',sans-serif;color:#c4c4c4;white-space:pre;transform:scaleX(.7);transform-origin:0 50%;">C</span><div class="a" style="left:1489px;top:149px;width:101.5px;height:4.4px;background:linear-gradient(90deg,#ffffff 0%,#00a0e8 100%);"></div><svg class="a" style="left:1484px;top:153.4px;" width="10" height="7.5" viewBox="0 0 10 7.5"><path d="M5 0 L9.4 4 V7.2 H0.6 V4 Z" fill="#c8c8c8"/></svg><div class="a" style="left:1599px;top:142px;width:34.5px;height:19.5px;background:#474747;border:1px solid #5c5c5c;border-radius:3px;box-sizing:border-box"></div><svg class="a" style="left:1602.50px;top:139.71px;overflow:hidden" width="7" height="16"><text class="m" x="0" y="13.2" fill="#f0f0f0">0</text></svg><svg class="a" style="left:1636.00px;top:142.61px;overflow:hidden" width="7" height="16"><text class="m" x="0" y="13.2" fill="#cccccc">%</text></svg><span class="a" style="left:1470.5px;top:170px;font:bold 11.5px/14px 'Liberation Serif',sans-serif;color:#c4c4c4;white-space:pre;transform:scaleX(.7);transform-origin:0 50%;">M</span><div class="a" style="left:1489px;top:174px;width:101.5px;height:4.4px;background:linear-gradient(90deg,#ffffff 0%,#e4007f 100%);"></div><svg class="a" style="left:1484px;top:178.4px;" width="10" height="7.5" viewBox="0 0 10 7.5"><path d="M5 0 L9.4 4 V7.2 H0.6 V4 Z" fill="#c8c8c8"/></svg><div class="a" style="left:1599px;top:167px;width:34.5px;height:19.5px;background:#474747;border:1px solid #5c5c5c;border-radius:3px;box-sizing:border-box"></div><svg class="a" style="left:1602.50px;top:164.71px;overflow:hidden" width="7" height="16"><text class="m" x="0" y="13.2" fill="#f0f0f0">0</text></svg><svg class="a" style="left:1636.00px;top:167.61px;overflow:hidden" width="7" height="16"><text class="m" x="0" y="13.2" fill="#cccccc">%</text></svg><span class="a" style="left:1470.5px;top:195px;font:bold 11.5px/14px 'Liberation Serif',sans-serif;color:#c4c4c4;white-space:pre;transform:scaleX(.7);transform-origin:0 50%;">Y</span><div class="a" style="left:1489px;top:199px;width:101.5px;height:4.4px;background:linear-gradient(90deg,#ffffff 0%,#fff100 100%);"></div><svg class="a" style="left:1484px;top:203.4px;" width="10" height="7.5" viewBox="0 0 10 7.5"><path d="M5 0 L9.4 4 V7.2 H0.6 V4 Z" fill="#c8c8c8"/></svg><div class="a" style="left:1599px;top:192px;width:34.5px;height:19.5px;background:#474747;border:1px solid #5c5c5c;border-radius:3px;box-sizing:border-box"></div><svg class="a" style="left:1602.50px;top:189.71px;overflow:hidden" width="7" height="16"><text class="m" x="0" y="13.2" fill="#f0f0f0">0</text></svg><svg class="a" style="left:1636.00px;top:192.61px;overflow:hidden" width="7" height="16"><text class="m" x="0" y="13.2" fill="#cccccc">%</text></svg><span class="a" style="left:1470.5px;top:220px;font:bold 11.5px/14px 'Liberation Serif',sans-serif;color:#c4c4c4;white-space:pre;transform:scaleX(.7);transform-origin:0 50%;">K</span><div class="a" style="left:1489px;top:224px;width:101.5px;height:4.4px;background:linear-gradient(90deg,#ffffff 0%,#231815 100%);"></div><svg class="a" style="left:1484px;top:228.4px;" width="10" height="7.5" viewBox="0 0 10 7.5"><path d="M5 0 L9.4 4 V7.2 H0.6 V4 Z" fill="#c8c8c8"/></svg><div class="a" style="left:1599px;top:217px;width:34.5px;height:19.5px;background:#474747;border:1px solid #5c5c5c;border-radius:3px;box-sizing:border-box"></div><svg class="a" style="left:1602.50px;top:214.71px;overflow:hidden" width="7" height="16"><text class="m" x="0" y="13.2" fill="#f0f0f0">0</text></svg><svg class="a" style="left:1636.00px;top:217.61px;overflow:hidden" width="7" height="16"><text class="m" x="0" y="13.2" fill="#cccccc">%</text></svg><div class="a" style="left:1423.5px;top:247px;width:39.5px;height:13.5px;background:#ffffff;border:1px solid #3a3a3a;box-sizing:border-box"></div><div class="a" style="left:1437px;top:248px;width:12.5px;height:11.5px;background:#080505;"></div><svg class="a" style="left:1424.5px;top:248px;" width="12.5" height="11.5" viewBox="0 0 12.5 11.5"><path d="M0 11.5 L12.5 0" stroke="#ff1010" stroke-width="1.8"/></svg><div class="a" style="left:1462.5px;top:248px;width:1.5px;height:12px;background:#3a3a3a;"></div><div class="a" style="left:1424.5px;top:271px;width:214.5px;height:22.5px;background:#000;border:1px solid #3a3a3a;box-sizing:border-box;overflow:hidden"><div class="a" style="left:0;top:0;width:100%;height:100%;background:linear-gradient(90deg,#ff0000 0%,#ff8a00 9%,#fff000 17%,#8fc31f 27%,#22ac38 36%,#009944 43%,#00a0c8 52%,#00a0e9 55%,#0068b7 63%,#1d2088 71%,#920783 83%,#e4007f 92%,#e60012 100%)"></div><div class="a" style="left:0;top:0;width:100%;height:100%;background:linear-gradient(180deg,rgba(255,255,255,1) 0%,rgba(255,255,255,0) 48%,rgba(0,0,0,0) 52%,rgba(0,0,0,1) 100%)"></div></div></div></div>
<div class="p" style="left:1572.5px;top:646px;width:241px;height:256.5px;background:#535353;border-radius:4px 4px 0 0;box-shadow:0 0 0 1px #383838,1px 2px 4px rgba(0,0,0,.35)"><div class="a" style="left:-1572.5px;top:-646px"><div class="a" style="left:1572.5px;top:646px;width:241px;height:13.4px;background:#454545;"></div><div class="a" style="left:1572.5px;top:659.4px;width:241px;height:18.5px;background:#474747;"></div><div class="a" style="left:1572.5px;top:658.9px;width:241px;height:1px;background:#3b3b3b;"></div><div class="a" style="left:1572.5px;top:676.9px;width:241px;height:1px;background:#3f3f3f;"></div><svg class="a" style="left:1781.5px;top:650.2px;" width="10" height="6" viewBox="0 0 10 6"><path d="M4.5 0 L4.5 6 L0.5 3 Z M9.5 0 L9.5 6 L5.5 3 Z" fill="#d8d8d8"/></svg><svg class="a" style="left:1800.8px;top:649.4px;" width="8" height="8" viewBox="0 0 8 8"><path d="M1 1 L7 7 M7 1 L1 7" stroke="#d8d8d8" stroke-width="2" fill="none"/></svg><svg class="a" style="left:1796.5px;top:665.15px;" width="10" height="8" viewBox="0 0 10 8"><rect x="0" y="0" width="10" height="1" fill="#d0d0d0"/><rect x="0" y="2" width="10" height="1" fill="#d0d0d0"/><rect x="0" y="4" width="10" height="1" fill="#d0d0d0"/><rect x="0" y="6" width="10" height="1" fill="#d0d0d0"/></svg><div class="a" style="left:1572.5px;top:894px;width:241px;height:8.5px;background:#4e4e4e;"></div><div class="a" style="left:1572.5px;top:894px;width:241px;height:1px;background:#3a3a3a;"></div><svg class="a" style="left:1683px;top:896.5px;" width="20" height="4" viewBox="0 0 20 4"><rect x="0" y="0" width="1" height="4" fill="#363636"/><rect x="2" y="0" width="1" height="4" fill="#363636"/><rect x="4" y="0" width="1" height="4" fill="#363636"/><rect x="6" y="0" width="1" height="4" fill="#363636"/><rect x="8" y="0" width="1" height="4" fill="#363636"/><rect x="10" y="0" width="1" height="4" fill="#363636"/><rect x="12" y="0" width="1" height="4" fill="#363636"/><rect x="14" y="0" width="1" height="4" fill="#363636"/><rect x="16" y="0" width="1" height="4" fill="#363636"/><rect x="18" y="0" width="1" height="4" fill="#363636"/></svg><div class="a" style="left:1572.5px;top:659.4px;width:44.5px;height:19.2px;background:#535353;"></div><svg class="a" style="left:1586.50px;top:659.46px;overflow:visible" width="27" height="18"><text x="0" y="14.70" font-size="12.2" font-weight="500" fill="#e6e6e6">渐变</text></svg><svg class="a" style="left:1575.5px;top:664.3px;" width="6" height="11" viewBox="0 0 6 11"><path d="M.8 4 L3 1.5 L5.2 4 M.8 7 L3 9.5 L5.2 7" fill="none" stroke="#d0d0d0" stroke-width="1.1"/></svg><div class="a" style="left:1578px;top:684px;width:32px;height:31.5px;background:linear-gradient(90deg,#ffffff 0%,#f0f0f0 12%,#8c8c8c 55%,#1c1c1c 92%,#101010 100%);border:1px solid #3a3a3a;box-sizing:border-box"></div><div class="a" style="left:1579px;top:685px;width:30px;height:3px;background:linear-gradient(180deg,rgba(255,255,255,.55),rgba(255,255,255,0));"></div><svg class="a" style="left:1612.5px;top:697.5px;" width="6" height="4" viewBox="0 0 6 4"><path d="M0 0 H5.6 L2.8 3.6 Z" fill="#cfcfcf"/></svg><div class="a" style="left:1579px;top:721px;width:19px;height:19px;background:#fff;border:1px solid #3a3a3a;box-sizing:border-box"></div><svg class="a" style="left:1579.5px;top:721.5px;" width="18" height="18" viewBox="0 0 18 18"><path d="M0 18 L18 0" stroke="#ff1010" stroke-width="1.8"/></svg><div class="a" style="left:1589px;top:731px;width:19.5px;height:19.5px;background:#fff;border:1px solid #3a3a3a;box-sizing:border-box"></div><div class="a" style="left:1594.5px;top:736.5px;width:8.5px;height:8.5px;background:#4a4a4a;border:1px solid #2c2c2c;box-sizing:border-box"></div><svg class="a" style="left:1628.30px;top:684.44px;overflow:visible" width="26" height="17"><text x="0" y="14.50" font-size="12" font-weight="500" fill="#dcdcdc">类型</text></svg><span class="a" style="left:1656px;top:687.3px;font:normal 11px/14px 'Liberation Sans',sans-serif;color:#dcdcdc;white-space:pre;">:</span><div class="a" style="left:1664.4px;top:684.7px;width:143px;height:19.6px;background:#484848;border:1px solid #606060;border-radius:3px;box-sizing:border-box"></div><svg class="a" style="left:1794.4px;top:692.35px;" width="8.4" height="5.3" viewBox="0 0 8.4 5.3"><path d="M1 1 L4.2 4.3 L7.4 1" fill="none" stroke="#e6e6e6" stroke-width="1.35" stroke-linecap="square"/></svg><svg class="a" style="left:1628.30px;top:710.94px;overflow:visible" width="26" height="17"><text x="0" y="14.50" font-size="12" fill="#6f6f6f">描边</text></svg><span class="a" style="left:1656px;top:713.8px;font:normal 11px/14px 'Liberation Sans',sans-serif;color:#6f6f6f;white-space:pre;">:</span><div class="a" style="left:1664.4px;top:710.6px;width:67px;height:20.8px;background:none;border:1px solid #5f5f5f;border-radius:3px;box-sizing:border-box"></div><div class="a" style="left:1686.2px;top:711.6px;width:1px;height:18.8px;background:#5f5f5f;"></div><div class="a" style="left:1709px;top:711.6px;width:1px;height:18.8px;background:#5f5f5f;"></div><svg class="a" style="left:1668px;top:714px;" width="15" height="14" viewBox="0 0 15 14"><defs><linearGradient id="gia" x1="0" x2="1" y1="0" y2="1"><stop offset="0" stop-color="#8a8a8a"/><stop offset="1" stop-color="#5c5c5c"/></linearGradient></defs><path d="M0 0 H14.5 V5.5 H5.5 V14 H0 Z" fill="url(#gia)"/></svg><svg class="a" style="left:1690.5px;top:714px;" width="15" height="14" viewBox="0 0 15 14"><defs><linearGradient id="gib" x1="0" x2="1" y1="0" y2="1"><stop offset="0" stop-color="#8a8a8a"/><stop offset="1" stop-color="#5c5c5c"/></linearGradient></defs><path d="M0 0 H14.5 V5.5 H5.5 V14 H0 Z" fill="url(#gib)"/></svg><svg class="a" style="left:1713.5px;top:714px;" width="15" height="14" viewBox="0 0 15 14"><defs><linearGradient id="gic" x1="0" x2="1" y1="0" y2="1"><stop offset="0" stop-color="#8a8a8a"/><stop offset="1" stop-color="#5c5c5c"/></linearGradient></defs><path d="M0 0 H14.5 V5.5 H5.5 V14 H0 Z" fill="url(#gic)"/></svg><svg class="a" style="left:1645px;top:741px;" width="15" height="12" viewBox="0 0 15 12"><path d="M1 10.8 H14 M1 10.8 L10 0.8 M9.6 10.8 A6 6 0 0 0 6.6 5" fill="none" stroke="#bdbdbd" stroke-width="1.1"/></svg><div class="a" style="left:1664.4px;top:737.4px;width:69.5px;height:20px;background:#595959;border-radius:2px"></div><svg class="a" style="left:1719.05px;top:745.1px;" width="8.5" height="5.2" viewBox="0 0 8.5 5.2"><path d="M1 1 L4.25 4.2 L7.5 1" fill="none" stroke="#767676" stroke-width="1.3" stroke-linecap="square"/></svg><div class="a" style="left:1664.4px;top:763.3px;width:69.5px;height:20px;background:#595959;border-radius:2px"></div><svg class="a" style="left:1719.05px;top:771px;" width="8.5" height="5.2" viewBox="0 0 8.5 5.2"><path d="M1 1 L4.25 4.2 L7.5 1" fill="none" stroke="#767676" stroke-width="1.3" stroke-linecap="square"/></svg><div class="a" style="left:1664.4px;top:842.2px;width:69.5px;height:20.4px;background:#595959;border-radius:2px"></div><svg class="a" style="left:1719.05px;top:850.1px;" width="8.5" height="5.2" viewBox="0 0 8.5 5.2"><path d="M1 1 L4.25 4.2 L7.5 1" fill="none" stroke="#767676" stroke-width="1.3" stroke-linecap="square"/></svg><div class="a" style="left:1664.4px;top:868.3px;width:69.5px;height:20.2px;background:#595959;border-radius:2px"></div><svg class="a" style="left:1719.05px;top:876.1px;" width="8.5" height="5.2" viewBox="0 0 8.5 5.2"><path d="M1 1 L4.25 4.2 L7.5 1" fill="none" stroke="#767676" stroke-width="1.3" stroke-linecap="square"/></svg><svg class="a" style="left:1643px;top:766px;" width="17" height="15" viewBox="0 0 17 15"><path d="M2.6 1 V13.5 M0.6 3.4 L2.6 0.8 L4.6 3.4 M0.6 11 L2.6 13.6 L4.6 11" fill="none" stroke="#c4c4c4" stroke-width="1.1"/><ellipse cx="11" cy="6" rx="5" ry="3.6" fill="none" stroke="#c4c4c4" stroke-width="1.1"/><path d="M6 12.4 H16 M6 11 V13.8 M16 11 V13.8" stroke="#c4c4c4" stroke-width="1"/></svg><svg class="a" style="left:1586.5px;top:762.5px;" width="16" height="14" viewBox="0 0 16 14"><rect x="1" y=".6" width="7.6" height="4.8" fill="#5e5e5e" stroke="#757575" stroke-width="1"/><path d="M10 1.6 H14 L12 4 Z" fill="#757575"/><rect x="6.4" y="8.4" width="8.4" height="5" fill="#757575"/><path d="M0.6 11.2 H4.6 L2.6 8.8 Z" fill="#757575"/></svg><div class="a" style="left:1583.4px;top:797px;width:193.6px;height:18.6px;background:linear-gradient(90deg,#ffffff 0%,#e6e6e6 18%,#bdbdbd 40%,#8a8a8a 60%,#4a4a4a 80%,#0a0a0a 96%,#000 100%);border:1px solid #1a1a1a;box-sizing:border-box"></div><svg class="a" style="left:1790px;top:802px;" width="11" height="13" viewBox="0 0 11 13"><g fill="none" stroke="#7a7a7a" stroke-width="1.1"><path d="M0.5 2.6 H10.5 M3.6 2.4 V0.8 H7.4 V2.4 M1.6 3 V12.2 H9.4 V3 M4 5 V10.4 M5.5 5 V10.4 M7 5 V10.4"/></g></svg><svg class="a" style="left:1604.50px;top:842.64px;overflow:visible" width="50" height="17"><text x="0" y="14.50" font-size="12" fill="#6f6f6f">不透明度</text></svg><span class="a" style="left:1656px;top:845.5px;font:normal 11px/14px 'Liberation Sans',sans-serif;color:#6f6f6f;white-space:pre;">:</span><svg class="a" style="left:1628.70px;top:868.64px;overflow:visible" width="26" height="17"><text x="0" y="14.50" font-size="12" fill="#6f6f6f">位置</text></svg><span class="a" style="left:1656px;top:871.5px;font:normal 11px/14px 'Liberation Sans',sans-serif;color:#6f6f6f;white-space:pre;">:</span></div></div>
<svg class="a" style="left:1439.00px;top:932.28px;overflow:visible" width="100" height="69"><text x="0" y="58.60" font-size="48.6" font-weight="700" fill="#1a1a1a" opacity=".55">头条</text></svg><svg class="a" style="left:1438.10px;top:931.38px;overflow:visible" width="100" height="69"><text x="0" y="58.60" font-size="48.6" font-weight="700" fill="#1a1a1a" opacity=".8">头条</text></svg><svg class="a" style="left:1436.80px;top:929.88px;overflow:visible" width="100" height="69"><text x="0" y="58.60" font-size="48.6" font-weight="700" fill="#ffffff" stroke="#ffffff" stroke-width="0.58">头条</text></svg>
<svg class="a" style="left:1546.40px;top:931.72px;overflow:visible" width="346" height="70"><text x="0" y="59.50" font-size="49.5" fill="#1a1a1a" opacity=".55">@花花平面设计</text></svg><svg class="a" style="left:1545.50px;top:930.82px;overflow:visible" width="346" height="70"><text x="0" y="59.50" font-size="49.5" fill="#1a1a1a" opacity=".8">@花花平面设计</text></svg><svg class="a" style="left:1544.20px;top:929.32px;overflow:visible" width="346" height="70"><text x="0" y="59.50" font-size="49.5" fill="#ffffff" stroke="#ffffff" stroke-width="0.59">@花花平面设计</text></svg></div></body></html>
